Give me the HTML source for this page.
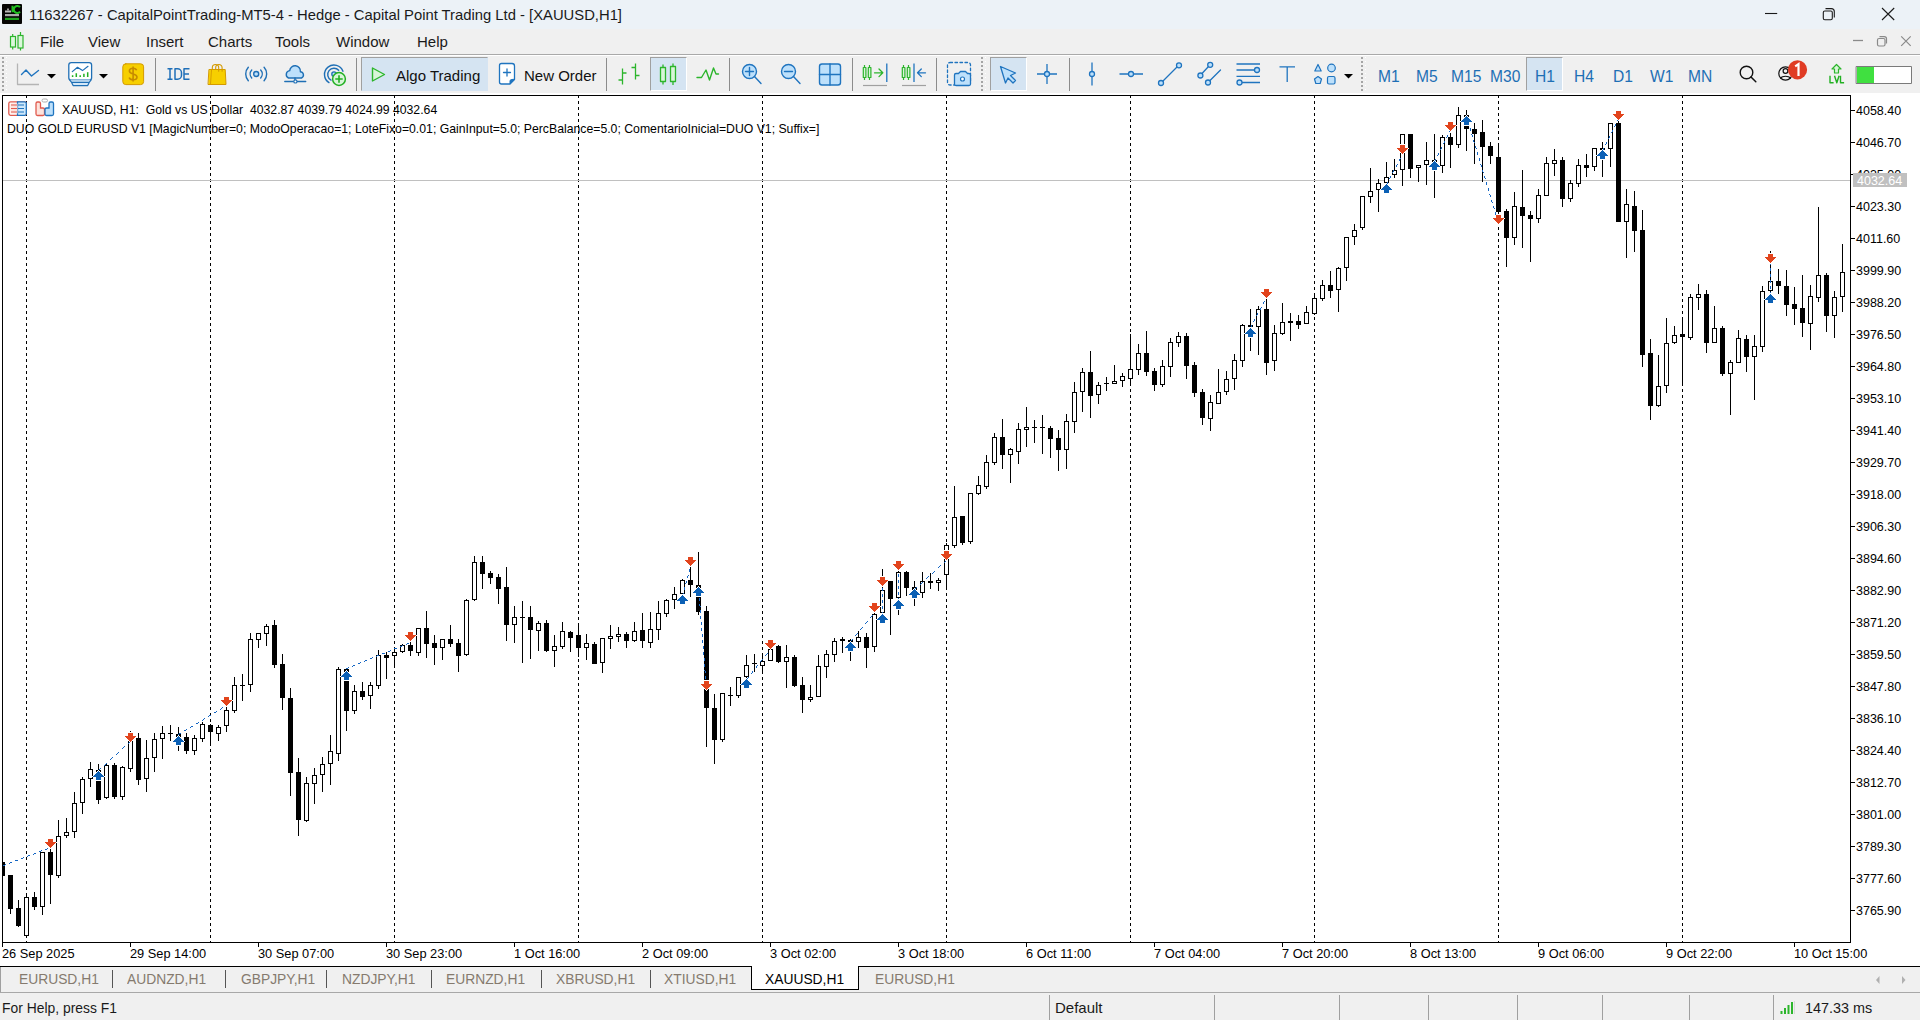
<!DOCTYPE html>
<html><head><meta charset="utf-8">
<style>
*{margin:0;padding:0;box-sizing:border-box}
html,body{width:1920px;height:1020px;overflow:hidden;background:#f0f0f0;font-family:"Liberation Sans",sans-serif;color:#000;position:relative}
.abs{position:absolute}
#title{position:absolute;left:0;top:0;width:1920px;height:29px;background:#ecf2f7}
#title .t{position:absolute;left:29px;top:7px;font-size:14.8px;color:#1a1a1a;white-space:nowrap}
#menu{position:absolute;left:0;top:29px;width:1920px;height:26px;background:#f0f0f0;border-bottom:1px solid #a9a9a9}
#menu .m{position:absolute;top:4px;font-size:15px;color:#1a1a1a}
#tb{position:absolute;left:0;top:55px;width:1920px;height:38px;background:#f0f0f0;box-shadow:inset 0 1px 0 #fff}
.sep{position:absolute;top:3px;width:1px;height:33px;background:#8c8c8c}
.grip{position:absolute;top:2px;width:8px;height:36px}
.tbt{position:absolute;font-size:15px;color:#111;top:11.5px;white-space:nowrap}
.tf{position:absolute;font-size:15.6px;color:#1e6fb5;top:12.5px}
.sel{position:absolute;background:#d5e4f2;border:1px solid #c4d6e8}
.pl{position:absolute;left:1856px;font-size:12.5px;line-height:14px;white-space:nowrap}
.dl{position:absolute;top:947px;font-size:12.8px;line-height:14px;white-space:nowrap}
.curp{position:absolute;left:1853px;top:173px;width:54px;height:14px;background:#c0c0c0;color:#fff;font-size:12.5px;line-height:16px;padding-left:4px;overflow:hidden}
.ct{position:absolute;font-size:12.25px;line-height:13px;white-space:nowrap}
#tabs{position:absolute;left:0;top:966px;width:1920px;height:27px;background:#f0f0f0;border-top:1px solid #000;border-bottom:1px solid #a8a8a8}
.tab{position:absolute;top:3.5px;font-size:14.4px;color:#857a6e;white-space:nowrap;transform:scaleX(0.96);transform-origin:0 0}
.tsep{position:absolute;top:2.5px;width:1px;height:18px;background:#555}
#status{position:absolute;left:0;top:993px;width:1920px;height:27px;background:#f0f0f0}
.st{position:absolute;top:6px;font-size:15px;transform-origin:0 0;color:#1a1a1a;white-space:nowrap}
.ssep{position:absolute;top:2px;width:1px;height:25px;background:#a0a0a0}
</style></head><body>
<div id="title">
  <svg class="abs" style="left:2px;top:4px" width="20" height="20"><rect width="20" height="20" rx="1" fill="#050505"/><path d="M10.5 1.8v6.5M18 3.2a3.5 3.5 0 1 0 0 4.5" stroke="#22c022" stroke-width="2" fill="none"/><rect x="3" y="6.5" width="6" height="2" fill="#bbb"/><rect x="5" y="4.5" width="2" height="2" fill="#999"/><rect x="3" y="10" width="14" height="2.2" fill="#aaa"/><rect x="3" y="13.8" width="14" height="2.2" fill="#1fa51f"/></svg>
  <div class="t">11632267 - CapitalPointTrading-MT5-4 - Hedge - Capital Point Trading Ltd - [XAUUSD,H1]</div>
  <svg class="abs" style="left:1740px;top:0" width="180" height="29" fill="none"><path d="M25 13.5h12.2" stroke="#1a1a1a" stroke-width="1.1"/><rect x="83.3" y="11" width="9" height="8.7" rx="1.5" stroke="#1a1a1a" stroke-width="1.1"/><path d="M85.5 8.6h5.8a3 3 0 0 1 3 3v5.8" stroke="#1a1a1a" stroke-width="1.1"/><path d="M142 8l12.2 12M154.2 8l-12.2 12" stroke="#1a1a1a" stroke-width="1.1"/></svg>
</div>
<div id="menu">
  <svg class="abs" style="left:0;top:-29px" width="30" height="60" fill="none"><path d="M12.7 34v15.5M20.5 32v18.5" stroke="#2db52d" stroke-width="1.2"/><rect x="10.5" y="36.5" width="5" height="10.5" fill="#dcf7dc" stroke="#2db52d" stroke-width="1.2"/><rect x="18" y="35.5" width="5" height="12.5" fill="#dcf7dc" stroke="#2db52d" stroke-width="1.2"/></svg>
  <div class="m" style="left:40px">File</div>
  <div class="m" style="left:88px">View</div>
  <div class="m" style="left:146px">Insert</div>
  <div class="m" style="left:208px">Charts</div>
  <div class="m" style="left:275px">Tools</div>
  <div class="m" style="left:336px">Window</div>
  <div class="m" style="left:417px">Help</div>
  <svg class="abs" style="left:1840px;top:-29px" width="80" height="60" fill="none"><path d="M13 40.5h10" stroke="#8a8a8a" stroke-width="1.3"/><rect x="37.5" y="38.5" width="7.5" height="7.5" rx="1.5" stroke="#8a8a8a" stroke-width="1.2"/><path d="M39.5 36.6h4.8a2.2 2.2 0 0 1 2.2 2.2v4.8" stroke="#8a8a8a" stroke-width="1.2"/><path d="M61.2 36.3l9.5 9.5M70.7 36.3l-9.5 9.5" stroke="#8a8a8a" stroke-width="1.2"/></svg>
</div>
<div id="tb">
  <svg class="grip" style="left:2px" width="8" height="36"><rect x="0" y="0" width="2" height="2" fill="#a4a4a4"/><rect x="4" y="0" width="1" height="1" fill="#fff"/><rect x="0" y="4" width="2" height="2" fill="#a4a4a4"/><rect x="4" y="4" width="1" height="1" fill="#fff"/><rect x="0" y="8" width="2" height="2" fill="#a4a4a4"/><rect x="4" y="8" width="1" height="1" fill="#fff"/><rect x="0" y="12" width="2" height="2" fill="#a4a4a4"/><rect x="4" y="12" width="1" height="1" fill="#fff"/><rect x="0" y="16" width="2" height="2" fill="#a4a4a4"/><rect x="4" y="16" width="1" height="1" fill="#fff"/><rect x="0" y="20" width="2" height="2" fill="#a4a4a4"/><rect x="4" y="20" width="1" height="1" fill="#fff"/><rect x="0" y="24" width="2" height="2" fill="#a4a4a4"/><rect x="4" y="24" width="1" height="1" fill="#fff"/><rect x="0" y="28" width="2" height="2" fill="#a4a4a4"/><rect x="4" y="28" width="1" height="1" fill="#fff"/><rect x="0" y="32" width="2" height="2" fill="#a4a4a4"/><rect x="4" y="32" width="1" height="1" fill="#fff"/></svg>
  <div class="sep" style="left:155px"></div>
  <div class="sep" style="left:356px"></div>
  <div class="sep" style="left:606px"></div>
  <div class="sep" style="left:729px"></div>
  <div class="sep" style="left:852px"></div>
  <div class="sep" style="left:936px"></div>
  <svg class="grip" style="left:981px" width="8" height="36"><rect x="0" y="0" width="2" height="2" fill="#a4a4a4"/><rect x="4" y="0" width="1" height="1" fill="#fff"/><rect x="0" y="4" width="2" height="2" fill="#a4a4a4"/><rect x="4" y="4" width="1" height="1" fill="#fff"/><rect x="0" y="8" width="2" height="2" fill="#a4a4a4"/><rect x="4" y="8" width="1" height="1" fill="#fff"/><rect x="0" y="12" width="2" height="2" fill="#a4a4a4"/><rect x="4" y="12" width="1" height="1" fill="#fff"/><rect x="0" y="16" width="2" height="2" fill="#a4a4a4"/><rect x="4" y="16" width="1" height="1" fill="#fff"/><rect x="0" y="20" width="2" height="2" fill="#a4a4a4"/><rect x="4" y="20" width="1" height="1" fill="#fff"/><rect x="0" y="24" width="2" height="2" fill="#a4a4a4"/><rect x="4" y="24" width="1" height="1" fill="#fff"/><rect x="0" y="28" width="2" height="2" fill="#a4a4a4"/><rect x="4" y="28" width="1" height="1" fill="#fff"/><rect x="0" y="32" width="2" height="2" fill="#a4a4a4"/><rect x="4" y="32" width="1" height="1" fill="#fff"/></svg>
  <div class="sep" style="left:1069px"></div>
  <svg class="grip" style="left:1361px" width="8" height="36"><rect x="0" y="0" width="2" height="2" fill="#a4a4a4"/><rect x="4" y="0" width="1" height="1" fill="#fff"/><rect x="0" y="4" width="2" height="2" fill="#a4a4a4"/><rect x="4" y="4" width="1" height="1" fill="#fff"/><rect x="0" y="8" width="2" height="2" fill="#a4a4a4"/><rect x="4" y="8" width="1" height="1" fill="#fff"/><rect x="0" y="12" width="2" height="2" fill="#a4a4a4"/><rect x="4" y="12" width="1" height="1" fill="#fff"/><rect x="0" y="16" width="2" height="2" fill="#a4a4a4"/><rect x="4" y="16" width="1" height="1" fill="#fff"/><rect x="0" y="20" width="2" height="2" fill="#a4a4a4"/><rect x="4" y="20" width="1" height="1" fill="#fff"/><rect x="0" y="24" width="2" height="2" fill="#a4a4a4"/><rect x="4" y="24" width="1" height="1" fill="#fff"/><rect x="0" y="28" width="2" height="2" fill="#a4a4a4"/><rect x="4" y="28" width="1" height="1" fill="#fff"/><rect x="0" y="32" width="2" height="2" fill="#a4a4a4"/><rect x="4" y="32" width="1" height="1" fill="#fff"/></svg>
  <div class="sel" style="left:361px;top:2px;width:127px;height:34px;border-color:#a0a0a0 #d6e4f2 #d6e4f2 #a0a0a0"></div>
  <div class="sel" style="left:650px;top:2px;width:37px;height:34px;border-color:#a0a0a0 #fff #fff #a0a0a0"></div>
  <div class="sel" style="left:990px;top:2px;width:37px;height:34px;border-color:#a0a0a0 #fff #fff #a0a0a0"></div>
  <div class="sel" style="left:1526px;top:2px;width:37px;height:34px;border-color:#a0a0a0 #fff #fff #a0a0a0"></div>
  <div class="tbt" style="left:396px">Algo Trading</div>
  <div class="tbt" style="left:524px">New Order</div>
  <div class="tf" style="left:1378px">M1</div>
  <div class="tf" style="left:1416px">M5</div>
  <div class="tf" style="left:1451px">M15</div>
  <div class="tf" style="left:1490px">M30</div>
  <div class="tf" style="left:1535px">H1</div>
  <div class="tf" style="left:1574px">H4</div>
  <div class="tf" style="left:1613px">D1</div>
  <div class="tf" style="left:1650px">W1</div>
  <div class="tf" style="left:1688px">MN</div>
</div>
<svg class="abs" style="left:0;top:0" width="1920" height="93" fill="none" stroke-linecap="round" stroke-linejoin="round">
  <!-- line chart -->
  <path d="M17.5 63.5V84.5H39" stroke="#b4b4b4" stroke-width="1.3" stroke-linecap="butt"/>
  <path d="M21.5 74.5L26 70L31.5 76L38.5 70.5" stroke="#1f74bf" stroke-width="1.4"/>
  <path d="M47 74h9l-4.5 4.5z" fill="#000" stroke="none"/>
  <!-- monitor -->
  <rect x="68.8" y="62.6" width="22.8" height="17.6" rx="2.5" fill="#fff" stroke="#1f6fb5" stroke-width="1.3"/>
  <path d="M69.8 80.2l1.8 2.2h17.6l1.8-2.2M71.6 82.4l1.5 3.2h14.6l1.5-3.2" fill="#d4e8f8" stroke="#1f6fb5" stroke-width="1.2"/>
  <path d="M72.3 71.6L77.5 67.3L82.5 70.6L88 66.3" stroke="#1f6fb5" stroke-width="1.2"/>
  <path d="M72.6 75.3v1.6M76.3 73.3v3.6M80.2 75.3v1.6M83.9 73.7v3.2M87.7 72.3v4.6" stroke="#22b022" stroke-width="1.5" stroke-linecap="butt"/>
  <path d="M99 74h9l-4.5 4.5z" fill="#000" stroke="none"/>
  <!-- dollar -->
  <rect x="122.8" y="63.8" width="20.8" height="20.8" rx="3" fill="#f7cf00" stroke="#d49a00" stroke-width="1"/>
  <path d="M136.6 70.3a3.6 2.8 0 0 0-3.5-2.1c-2.2 0-3.7 1.1-3.7 2.8c0 3.8 7.6 2 7.6 6c0 1.8-1.7 2.8-3.9 2.8a4 3 0 0 1-3.9-2.3M133.1 66.4v15" stroke="#c68a00" stroke-width="1.6" stroke-linecap="butt"/>
  <!-- IDE -->
  <path d="M167.5 68.8h5M167.5 79.2h5M170 68.8v10.4" stroke="#1f6fb8" stroke-width="1.5" stroke-linecap="butt"/>
  <path d="M175 68.8h2.5a4 4 0 0 1 4 4v2.4a4 4 0 0 1-4 4h-2.5z" stroke="#1f6fb8" stroke-width="1.5" stroke-linecap="butt"/>
  <path d="M189.5 68.8h-5.5v10.4h5.5M184 74h5" stroke="#1f6fb8" stroke-width="1.5" stroke-linecap="butt"/>
  <!-- bag -->
  <path d="M209.3 69.5h15.9l0.8 15h-17.6z" fill="#f7cf00" stroke="#d49a00" stroke-width="1"/>
  <path d="M211.5 69.8l-1 14.5" stroke="#d49a00" stroke-width="0.9"/>
  <path d="M212.3 69.5v-1.8a3.2 3.2 0 0 1 6.4 0v3.5M215.7 69.5v-1.8a3.2 3.2 0 0 1 6.4 0v3.5" stroke="#d49a00" stroke-width="1.1"/>
  <!-- signal -->
  <circle cx="256.2" cy="74" r="2.5" fill="#bde0fb" stroke="#1f6fb5" stroke-width="1.4"/>
  <path d="M251.7 70a6 6 0 0 0 0 8M260.7 70a6 6 0 0 1 0 8M248.3 67.3a10 10 0 0 0 0 13.4M264.1 67.3a10 10 0 0 1 0 13.4" stroke="#1f6fb5" stroke-width="1.4"/>
  <!-- cloud -->
  <path d="M288.5 78a3.9 3.9 0 0 1 1.2-7.4a5.3 5.3 0 0 1 10.7 1.1a3.3 3.3 0 0 1 1.1 6.3z" fill="#bde0fb" stroke="#1f6fb5" stroke-width="1.4"/>
  <path d="M295 78v2.3M284.8 81.5h8.6M297.4 81.5h8.3" stroke="#1f6fb5" stroke-width="1.4" stroke-linecap="round"/>
  <circle cx="295.4" cy="81.4" r="1.6" fill="#fff" stroke="#1f6fb5" stroke-width="1.2"/>
  <!-- radar plus -->
  <path d="M328.97 82.56A9.5 9.5 0 1 1 342.93 71.25M331.04 80.06A6.3 6.3 0 1 1 338.68 70.28" stroke="#1f6fb5" stroke-width="1.4" stroke-linecap="round"/>
  <circle cx="334" cy="74" r="2.2" fill="#bde0fb" stroke="#1f6fb5" stroke-width="1.3"/>
  <circle cx="339" cy="79" r="6.4" fill="#d8f5d8" stroke="#22b022" stroke-width="1.5"/>
  <path d="M339 75.3v7.4M335.3 79h7.4" stroke="#22b022" stroke-width="1.6" stroke-linecap="butt"/>
  <!-- algo play -->
  <path d="M372.5 68l12 6.5l-12 6.5z" fill="#d8f5d8" stroke="#2cb52c" stroke-width="1.4"/>
  <!-- new order -->
  <path d="M501.5 63.5h10.5a2.5 2.5 0 0 1 2.5 2.5v13.5l-4.5 4.5h-8.5a2 2 0 0 1-2-2v-16.5a2 2 0 0 1 2-2z" fill="#fff" stroke="#1f74bf" stroke-width="1.3"/>
  <path d="M514.5 79.5l-4.5 4.5v-3a1.5 1.5 0 0 1 1.5-1.5z" fill="#1f74bf" stroke="#1f74bf" stroke-width="1"/>
  <path d="M507 69v7M503.5 72.5h7" stroke="#1f74bf" stroke-width="1.3"/>
  <!-- bar chart -->
  <path d="M622.5 68.5v16M618.5 80h4M622.5 73h4M635.5 63.5v16M631.5 67.5h4M635.5 75.5h4" stroke="#2cb52c" stroke-width="1.3" stroke-linecap="butt"/>
  <!-- candles -->
  <path d="M663 64.5v20M673 63.5v21.5" stroke="#2cb52c" stroke-width="1.3" stroke-linecap="butt"/>
  <rect x="660.5" y="67.5" width="5" height="14" fill="#d8f5d8" stroke="#2cb52c" stroke-width="1.3"/>
  <rect x="670.5" y="66.5" width="5" height="15" fill="#d8f5d8" stroke="#2cb52c" stroke-width="1.3"/>
  <!-- line -->
  <path d="M697 77.5h4.5l4.5-7.5l3.5 10l4-12l2.5 6h2.5" stroke="#2cb52c" stroke-width="1.4"/>
  <!-- zoom in/out -->
  <circle cx="749.5" cy="71.5" r="7" fill="#bde0fb" stroke="#1f74bf" stroke-width="1.4"/>
  <path d="M754.5 76.5l6.5 7M749.5 67.5v8M745.5 71.5h8" stroke="#1f74bf" stroke-width="1.4"/>
  <circle cx="788.5" cy="71.5" r="7" fill="#bde0fb" stroke="#1f74bf" stroke-width="1.4"/>
  <path d="M793.5 76.5l6.5 7M784.5 71.5h8" stroke="#1f74bf" stroke-width="1.4"/>
  <!-- grid -->
  <rect x="819.5" y="64" width="21" height="21" rx="2.5" fill="#bde0fb" stroke="#1f74bf" stroke-width="1.4"/>
  <path d="M830 64v21M819.5 74.5h21" stroke="#1f74bf" stroke-width="1.4"/>
  <!-- autoscroll -->
  <path d="M864.5 65v15M869.5 65v15" stroke="#2cb52c" stroke-width="1.2" stroke-linecap="butt"/>
  <rect x="863.3" y="67.5" width="2.6" height="10" fill="#d8f5d8" stroke="#2cb52c" stroke-width="1.2"/>
  <rect x="868.3" y="67.5" width="2.6" height="10" fill="#d8f5d8" stroke="#2cb52c" stroke-width="1.2"/>
  <path d="M874.5 72.8h8M879 69l3.8 3.8l-3.8 3.8" stroke="#2cb52c" stroke-width="1.3"/>
  <path d="M886.8 63.5v18.5" stroke="#1f74bf" stroke-width="1.3" stroke-linecap="butt"/>
  <path d="M863 85.5h24" stroke="#a0a0a0" stroke-width="1.2" stroke-linecap="butt"/>
  <path d="M903.5 65v15M908.5 65v15" stroke="#2cb52c" stroke-width="1.2" stroke-linecap="butt"/>
  <rect x="902.3" y="67.5" width="2.6" height="10" fill="#d8f5d8" stroke="#2cb52c" stroke-width="1.2"/>
  <rect x="907.3" y="67.5" width="2.6" height="10" fill="#d8f5d8" stroke="#2cb52c" stroke-width="1.2"/>
  <path d="M914 63.5v18.5" stroke="#1f74bf" stroke-width="1.3" stroke-linecap="butt"/>
  <path d="M925.5 72.8h-8M921.3 69l-3.8 3.8l3.8 3.8" stroke="#1f74bf" stroke-width="1.3"/>
  <path d="M902 85.5h24" stroke="#a0a0a0" stroke-width="1.2" stroke-linecap="butt"/>
  <!-- screenshot -->
  <rect x="947.5" y="62.5" width="23" height="22.5" rx="2.5" stroke="#1f74bf" stroke-width="1.3" stroke-dasharray="2.5,2.5"/>
  <path d="M954.5 75a1.5 1.5 0 0 1 1.5-1.5h2.5l2-2h5l2 2h1.5a1.5 1.5 0 0 1 1.5 1.5v9a1.5 1.5 0 0 1-1.5 1.5h-13a1.5 1.5 0 0 1-1.5-1.5z" fill="#bde0fb" stroke="#1f74bf" stroke-width="1.3"/>
  <circle cx="962.5" cy="79" r="2" fill="#fff" stroke="#1f74bf" stroke-width="1.2"/>
  <!-- cursor -->
  <path d="M1000.5 66.5l15 6.5l-5 2.5l5 5l-2.5 2.5l-5-5l-2.5 5z" fill="#bde0fb" stroke="#1f74bf" stroke-width="1.3"/>
  <!-- crosshair -->
  <path d="M1037 74h7.5M1049.5 74h7.5M1047 64v7.5M1047 76.5v7.5" stroke="#1f74bf" stroke-width="1.3" stroke-linecap="butt"/>
  <circle cx="1047" cy="74" r="2.5" fill="#bde0fb" stroke="#1f74bf" stroke-width="1.3"/>
  <!-- vline -->
  <path d="M1092 62.5v9M1092 76.5v9" stroke="#1f74bf" stroke-width="1.3" stroke-linecap="butt"/>
  <circle cx="1092" cy="74" r="2.5" fill="#bde0fb" stroke="#1f74bf" stroke-width="1.3"/>
  <!-- hline -->
  <path d="M1119.5 74h9M1133.5 74h9.5" stroke="#1f74bf" stroke-width="1.3" stroke-linecap="butt"/>
  <circle cx="1131" cy="74" r="2.5" fill="#bde0fb" stroke="#1f74bf" stroke-width="1.3"/>
  <!-- trendline -->
  <path d="M1163 81l14-14" stroke="#1f74bf" stroke-width="1.3"/>
  <circle cx="1161" cy="83" r="2.5" fill="#bde0fb" stroke="#1f74bf" stroke-width="1.3"/>
  <circle cx="1179" cy="65.3" r="2.5" fill="#bde0fb" stroke="#1f74bf" stroke-width="1.3"/>
  <!-- channel -->
  <path d="M1202 73.5l6.5-7M1210 80.5l10.5-10.5" stroke="#1f74bf" stroke-width="1.3"/>
  <circle cx="1200.4" cy="75.5" r="2.5" fill="#bde0fb" stroke="#1f74bf" stroke-width="1.3"/>
  <circle cx="1210.2" cy="64.8" r="2.5" fill="#bde0fb" stroke="#1f74bf" stroke-width="1.3"/>
  <circle cx="1208" cy="82.5" r="2.5" fill="#bde0fb" stroke="#1f74bf" stroke-width="1.3"/>
  <!-- fibo -->
  <path d="M1236.5 64h23.5M1236.5 70h18M1236.5 76.3h23.5M1242 82.5h18" stroke="#1f74bf" stroke-width="1.3" stroke-linecap="butt"/>
  <circle cx="1257" cy="70" r="2.5" fill="#bde0fb" stroke="#1f74bf" stroke-width="1.3"/>
  <circle cx="1239.5" cy="82.5" r="2.5" fill="#bde0fb" stroke="#1f74bf" stroke-width="1.3"/>
  <!-- text T -->
  <path d="M1279.5 66.8h15.5M1287.2 66.8v15.2" stroke="#1f74bf" stroke-width="1.3" stroke-linecap="butt"/>
  <!-- shapes -->
  <path d="M1318 64.5l3.2 6.5h-6.4z" fill="#bde0fb" stroke="#1f74bf" stroke-width="1.2"/>
  <circle cx="1331.5" cy="68" r="3.8" fill="#bde0fb" stroke="#1f74bf" stroke-width="1.2"/>
  <path d="M1318 76.5l3.5 2.5l-1.3 4.5h-4.4l-1.3-4.5z" fill="#bde0fb" stroke="#1f74bf" stroke-width="1.2"/>
  <rect x="1327.5" y="76.5" width="7.5" height="7.5" rx="1.5" fill="#bde0fb" stroke="#1f74bf" stroke-width="1.2"/>
  <path d="M1344 74h9l-4.5 4.5z" fill="#000" stroke="none"/>
  <!-- search -->
  <circle cx="1746.5" cy="72.5" r="6.3" stroke="#111" stroke-width="1.4"/>
  <path d="M1751 77l4.8 4.8" stroke="#111" stroke-width="1.5"/>
  <!-- account -->
  <circle cx="1785.5" cy="73.5" r="6.7" stroke="#111" stroke-width="1.2"/>
  <circle cx="1785.5" cy="71" r="2.4" stroke="#111" stroke-width="1.2"/>
  <path d="M1780.5 78a5.5 3 0 0 1 10 0" stroke="#111" stroke-width="1.2"/>
  <circle cx="1797.5" cy="69.8" r="9.6" fill="#e03c24" stroke="none"/>
  <path d="M1795.2 66.3l3.3-2.3v12" stroke="#fff" stroke-width="2.2" stroke-linecap="butt" stroke-linejoin="miter"/>
  <!-- LVL -->
  <path d="M1836.5 64.5l-4.5 4.5h2.5v4h4v-4h2.5z" fill="#d8f5d8" stroke="#2cb52c" stroke-width="1.2"/>
  <path d="M1830 75.8v7h3.6M1834.5 75.8l2.3 7l2.3-7M1840.5 75.8v7h3.6" stroke="#22b022" stroke-width="1.4" stroke-linecap="butt" stroke-linejoin="round"/>
  <!-- progress -->
  <rect x="1856.5" y="66.5" width="55" height="17" fill="#fff" stroke="#7a7a7a" stroke-width="1"/>
  <rect x="1857" y="67" width="17" height="16" fill="#40e040" stroke="none"/>
</svg>
<svg width="1920" height="1020" style="position:absolute;left:0;top:0" shape-rendering="crispEdges">
<defs><clipPath id="pc"><rect x="3" y="96" width="1847" height="846"/></clipPath></defs>
<rect x="0" y="93" width="1920" height="873" fill="#fff"/>
<g clip-path="url(#pc)">
<line x1="26.5" y1="95" x2="26.5" y2="942" stroke="#000" stroke-width="1" stroke-dasharray="3,3"/>
<line x1="210.5" y1="95" x2="210.5" y2="942" stroke="#000" stroke-width="1" stroke-dasharray="3,3"/>
<line x1="394.5" y1="95" x2="394.5" y2="942" stroke="#000" stroke-width="1" stroke-dasharray="3,3"/>
<line x1="578.5" y1="95" x2="578.5" y2="942" stroke="#000" stroke-width="1" stroke-dasharray="3,3"/>
<line x1="762.5" y1="95" x2="762.5" y2="942" stroke="#000" stroke-width="1" stroke-dasharray="3,3"/>
<line x1="946.5" y1="95" x2="946.5" y2="942" stroke="#000" stroke-width="1" stroke-dasharray="3,3"/>
<line x1="1130.5" y1="95" x2="1130.5" y2="942" stroke="#000" stroke-width="1" stroke-dasharray="3,3"/>
<line x1="1314.5" y1="95" x2="1314.5" y2="942" stroke="#000" stroke-width="1" stroke-dasharray="3,3"/>
<line x1="1498.5" y1="95" x2="1498.5" y2="942" stroke="#000" stroke-width="1" stroke-dasharray="3,3"/>
<line x1="1682.5" y1="95" x2="1682.5" y2="942" stroke="#000" stroke-width="1" stroke-dasharray="3,3"/>
<rect x="3" y="180" width="1847" height="1" fill="#c0c0c0"/>
<rect x="2" y="862" width="1" height="16" fill="#000"/>
<rect x="0" y="862" width="5" height="14" fill="#000"/>
<rect x="10" y="875" width="1" height="39" fill="#000"/>
<rect x="8" y="875" width="5" height="34" fill="#000"/>
<rect x="18" y="900" width="1" height="27" fill="#000"/>
<rect x="16" y="908" width="5" height="18" fill="#000"/>
<rect x="26" y="893" width="1" height="45" fill="#000"/>
<rect x="24" y="897" width="5" height="39" fill="#000"/>
<rect x="25" y="898" width="3" height="37" fill="#fff"/>
<rect x="34" y="892" width="1" height="18" fill="#000"/>
<rect x="32" y="897" width="5" height="10" fill="#000"/>
<rect x="42" y="852" width="1" height="63" fill="#000"/>
<rect x="40" y="852" width="5" height="55" fill="#000"/>
<rect x="41" y="853" width="3" height="53" fill="#fff"/>
<rect x="50" y="847" width="1" height="57" fill="#000"/>
<rect x="48" y="852" width="5" height="23" fill="#000"/>
<rect x="58" y="820" width="1" height="58" fill="#000"/>
<rect x="56" y="836" width="5" height="40" fill="#000"/>
<rect x="57" y="837" width="3" height="38" fill="#fff"/>
<rect x="66" y="818" width="1" height="20" fill="#000"/>
<rect x="64" y="832" width="5" height="4" fill="#000"/>
<rect x="65" y="833" width="3" height="2" fill="#fff"/>
<rect x="74" y="792" width="1" height="46" fill="#000"/>
<rect x="72" y="803" width="5" height="29" fill="#000"/>
<rect x="73" y="804" width="3" height="27" fill="#fff"/>
<rect x="82" y="777" width="1" height="37" fill="#000"/>
<rect x="80" y="779" width="5" height="24" fill="#000"/>
<rect x="81" y="780" width="3" height="22" fill="#fff"/>
<rect x="90" y="762" width="1" height="25" fill="#000"/>
<rect x="88" y="769" width="5" height="10" fill="#000"/>
<rect x="89" y="770" width="3" height="8" fill="#fff"/>
<rect x="98" y="764" width="1" height="40" fill="#000"/>
<rect x="96" y="770" width="5" height="30" fill="#000"/>
<rect x="106" y="764" width="1" height="35" fill="#000"/>
<rect x="104" y="765" width="5" height="33" fill="#000"/>
<rect x="105" y="766" width="3" height="31" fill="#fff"/>
<rect x="114" y="763" width="1" height="36" fill="#000"/>
<rect x="112" y="765" width="5" height="32" fill="#000"/>
<rect x="122" y="766" width="1" height="34" fill="#000"/>
<rect x="120" y="767" width="5" height="30" fill="#000"/>
<rect x="121" y="768" width="3" height="28" fill="#fff"/>
<rect x="130" y="731" width="1" height="41" fill="#000"/>
<rect x="128" y="740" width="5" height="29" fill="#000"/>
<rect x="129" y="741" width="3" height="27" fill="#fff"/>
<rect x="138" y="733" width="1" height="52" fill="#000"/>
<rect x="136" y="738" width="5" height="42" fill="#000"/>
<rect x="146" y="740" width="1" height="52" fill="#000"/>
<rect x="144" y="758" width="5" height="21" fill="#000"/>
<rect x="145" y="759" width="3" height="19" fill="#fff"/>
<rect x="154" y="733" width="1" height="39" fill="#000"/>
<rect x="152" y="739" width="5" height="19" fill="#000"/>
<rect x="153" y="740" width="3" height="17" fill="#fff"/>
<rect x="162" y="726" width="1" height="33" fill="#000"/>
<rect x="160" y="733" width="5" height="6" fill="#000"/>
<rect x="161" y="734" width="3" height="4" fill="#fff"/>
<rect x="170" y="725" width="1" height="16" fill="#000"/>
<rect x="168" y="733" width="5" height="1" fill="#000"/>
<rect x="178" y="727" width="1" height="24" fill="#000"/>
<rect x="176" y="734" width="5" height="3" fill="#000"/>
<rect x="186" y="733" width="1" height="21" fill="#000"/>
<rect x="184" y="737" width="5" height="14" fill="#000"/>
<rect x="194" y="735" width="1" height="20" fill="#000"/>
<rect x="192" y="738" width="5" height="13" fill="#000"/>
<rect x="193" y="739" width="3" height="11" fill="#fff"/>
<rect x="202" y="722" width="1" height="20" fill="#000"/>
<rect x="200" y="724" width="5" height="15" fill="#000"/>
<rect x="201" y="725" width="3" height="13" fill="#fff"/>
<rect x="210" y="724" width="1" height="22" fill="#000"/>
<rect x="208" y="725" width="5" height="7" fill="#000"/>
<rect x="218" y="725" width="1" height="16" fill="#000"/>
<rect x="216" y="727" width="5" height="7" fill="#000"/>
<rect x="217" y="728" width="3" height="5" fill="#fff"/>
<rect x="226" y="707" width="1" height="25" fill="#000"/>
<rect x="224" y="710" width="5" height="16" fill="#000"/>
<rect x="225" y="711" width="3" height="14" fill="#fff"/>
<rect x="234" y="677" width="1" height="36" fill="#000"/>
<rect x="232" y="685" width="5" height="26" fill="#000"/>
<rect x="233" y="686" width="3" height="24" fill="#fff"/>
<rect x="242" y="674" width="1" height="27" fill="#000"/>
<rect x="240" y="685" width="5" height="1" fill="#000"/>
<rect x="250" y="633" width="1" height="59" fill="#000"/>
<rect x="248" y="639" width="5" height="46" fill="#000"/>
<rect x="249" y="640" width="3" height="44" fill="#fff"/>
<rect x="258" y="633" width="1" height="15" fill="#000"/>
<rect x="256" y="633" width="5" height="7" fill="#000"/>
<rect x="257" y="634" width="3" height="5" fill="#fff"/>
<rect x="266" y="624" width="1" height="22" fill="#000"/>
<rect x="264" y="626" width="5" height="8" fill="#000"/>
<rect x="265" y="627" width="3" height="6" fill="#fff"/>
<rect x="274" y="620" width="1" height="48" fill="#000"/>
<rect x="272" y="625" width="5" height="40" fill="#000"/>
<rect x="282" y="654" width="1" height="56" fill="#000"/>
<rect x="280" y="664" width="5" height="34" fill="#000"/>
<rect x="290" y="688" width="1" height="108" fill="#000"/>
<rect x="288" y="698" width="5" height="75" fill="#000"/>
<rect x="298" y="758" width="1" height="78" fill="#000"/>
<rect x="296" y="772" width="5" height="48" fill="#000"/>
<rect x="306" y="777" width="1" height="45" fill="#000"/>
<rect x="304" y="783" width="5" height="38" fill="#000"/>
<rect x="305" y="784" width="3" height="36" fill="#fff"/>
<rect x="314" y="768" width="1" height="36" fill="#000"/>
<rect x="312" y="775" width="5" height="9" fill="#000"/>
<rect x="313" y="776" width="3" height="7" fill="#fff"/>
<rect x="322" y="757" width="1" height="35" fill="#000"/>
<rect x="320" y="764" width="5" height="11" fill="#000"/>
<rect x="321" y="765" width="3" height="9" fill="#fff"/>
<rect x="330" y="735" width="1" height="50" fill="#000"/>
<rect x="328" y="751" width="5" height="13" fill="#000"/>
<rect x="329" y="752" width="3" height="11" fill="#fff"/>
<rect x="338" y="667" width="1" height="94" fill="#000"/>
<rect x="336" y="669" width="5" height="85" fill="#000"/>
<rect x="337" y="670" width="3" height="83" fill="#fff"/>
<rect x="346" y="668" width="1" height="63" fill="#000"/>
<rect x="344" y="669" width="5" height="42" fill="#000"/>
<rect x="354" y="685" width="1" height="29" fill="#000"/>
<rect x="352" y="691" width="5" height="20" fill="#000"/>
<rect x="353" y="692" width="3" height="18" fill="#fff"/>
<rect x="362" y="682" width="1" height="18" fill="#000"/>
<rect x="360" y="691" width="5" height="6" fill="#000"/>
<rect x="370" y="682" width="1" height="27" fill="#000"/>
<rect x="368" y="685" width="5" height="11" fill="#000"/>
<rect x="369" y="686" width="3" height="9" fill="#fff"/>
<rect x="378" y="650" width="1" height="39" fill="#000"/>
<rect x="376" y="655" width="5" height="31" fill="#000"/>
<rect x="377" y="656" width="3" height="29" fill="#fff"/>
<rect x="386" y="652" width="1" height="27" fill="#000"/>
<rect x="384" y="655" width="5" height="3" fill="#000"/>
<rect x="394" y="649" width="1" height="18" fill="#000"/>
<rect x="392" y="652" width="5" height="4" fill="#000"/>
<rect x="393" y="653" width="3" height="2" fill="#fff"/>
<rect x="402" y="644" width="1" height="9" fill="#000"/>
<rect x="400" y="645" width="5" height="7" fill="#000"/>
<rect x="401" y="646" width="3" height="5" fill="#fff"/>
<rect x="410" y="642" width="1" height="14" fill="#000"/>
<rect x="408" y="645" width="5" height="6" fill="#000"/>
<rect x="418" y="628" width="1" height="28" fill="#000"/>
<rect x="416" y="628" width="5" height="25" fill="#000"/>
<rect x="417" y="629" width="3" height="23" fill="#fff"/>
<rect x="426" y="611" width="1" height="47" fill="#000"/>
<rect x="424" y="628" width="5" height="16" fill="#000"/>
<rect x="434" y="635" width="1" height="30" fill="#000"/>
<rect x="432" y="643" width="5" height="5" fill="#000"/>
<rect x="442" y="639" width="1" height="21" fill="#000"/>
<rect x="440" y="639" width="5" height="9" fill="#000"/>
<rect x="441" y="640" width="3" height="7" fill="#fff"/>
<rect x="450" y="625" width="1" height="22" fill="#000"/>
<rect x="448" y="639" width="5" height="5" fill="#000"/>
<rect x="458" y="639" width="1" height="33" fill="#000"/>
<rect x="456" y="643" width="5" height="13" fill="#000"/>
<rect x="466" y="599" width="1" height="57" fill="#000"/>
<rect x="464" y="600" width="5" height="55" fill="#000"/>
<rect x="465" y="601" width="3" height="53" fill="#fff"/>
<rect x="474" y="556" width="1" height="45" fill="#000"/>
<rect x="472" y="562" width="5" height="38" fill="#000"/>
<rect x="473" y="563" width="3" height="36" fill="#fff"/>
<rect x="482" y="556" width="1" height="33" fill="#000"/>
<rect x="480" y="562" width="5" height="12" fill="#000"/>
<rect x="490" y="571" width="1" height="13" fill="#000"/>
<rect x="488" y="573" width="5" height="5" fill="#000"/>
<rect x="498" y="574" width="1" height="30" fill="#000"/>
<rect x="496" y="577" width="5" height="12" fill="#000"/>
<rect x="506" y="567" width="1" height="74" fill="#000"/>
<rect x="504" y="587" width="5" height="38" fill="#000"/>
<rect x="514" y="606" width="1" height="37" fill="#000"/>
<rect x="512" y="617" width="5" height="8" fill="#000"/>
<rect x="513" y="618" width="3" height="6" fill="#fff"/>
<rect x="522" y="601" width="1" height="62" fill="#000"/>
<rect x="520" y="617" width="5" height="1" fill="#000"/>
<rect x="530" y="606" width="1" height="53" fill="#000"/>
<rect x="528" y="617" width="5" height="13" fill="#000"/>
<rect x="538" y="621" width="1" height="30" fill="#000"/>
<rect x="536" y="623" width="5" height="8" fill="#000"/>
<rect x="537" y="624" width="3" height="6" fill="#fff"/>
<rect x="546" y="620" width="1" height="32" fill="#000"/>
<rect x="544" y="623" width="5" height="28" fill="#000"/>
<rect x="554" y="635" width="1" height="32" fill="#000"/>
<rect x="552" y="646" width="5" height="5" fill="#000"/>
<rect x="553" y="647" width="3" height="3" fill="#fff"/>
<rect x="562" y="622" width="1" height="27" fill="#000"/>
<rect x="560" y="631" width="5" height="16" fill="#000"/>
<rect x="561" y="632" width="3" height="14" fill="#fff"/>
<rect x="570" y="631" width="1" height="21" fill="#000"/>
<rect x="568" y="632" width="5" height="6" fill="#000"/>
<rect x="578" y="623" width="1" height="34" fill="#000"/>
<rect x="576" y="635" width="5" height="13" fill="#000"/>
<rect x="586" y="634" width="1" height="26" fill="#000"/>
<rect x="584" y="643" width="5" height="5" fill="#000"/>
<rect x="585" y="644" width="3" height="3" fill="#fff"/>
<rect x="594" y="642" width="1" height="22" fill="#000"/>
<rect x="592" y="644" width="5" height="20" fill="#000"/>
<rect x="602" y="638" width="1" height="35" fill="#000"/>
<rect x="600" y="638" width="5" height="25" fill="#000"/>
<rect x="601" y="639" width="3" height="23" fill="#fff"/>
<rect x="610" y="625" width="1" height="24" fill="#000"/>
<rect x="608" y="636" width="5" height="3" fill="#000"/>
<rect x="609" y="637" width="3" height="1" fill="#fff"/>
<rect x="618" y="627" width="1" height="15" fill="#000"/>
<rect x="616" y="634" width="5" height="3" fill="#000"/>
<rect x="617" y="635" width="3" height="1" fill="#fff"/>
<rect x="626" y="632" width="1" height="16" fill="#000"/>
<rect x="624" y="634" width="5" height="7" fill="#000"/>
<rect x="634" y="622" width="1" height="20" fill="#000"/>
<rect x="632" y="631" width="5" height="10" fill="#000"/>
<rect x="633" y="632" width="3" height="8" fill="#fff"/>
<rect x="642" y="613" width="1" height="35" fill="#000"/>
<rect x="640" y="630" width="5" height="11" fill="#000"/>
<rect x="650" y="612" width="1" height="36" fill="#000"/>
<rect x="648" y="629" width="5" height="14" fill="#000"/>
<rect x="649" y="630" width="3" height="12" fill="#fff"/>
<rect x="658" y="601" width="1" height="39" fill="#000"/>
<rect x="656" y="613" width="5" height="17" fill="#000"/>
<rect x="657" y="614" width="3" height="15" fill="#fff"/>
<rect x="666" y="599" width="1" height="18" fill="#000"/>
<rect x="664" y="600" width="5" height="14" fill="#000"/>
<rect x="665" y="601" width="3" height="12" fill="#fff"/>
<rect x="674" y="587" width="1" height="22" fill="#000"/>
<rect x="672" y="594" width="5" height="6" fill="#000"/>
<rect x="673" y="595" width="3" height="4" fill="#fff"/>
<rect x="682" y="579" width="1" height="15" fill="#000"/>
<rect x="680" y="580" width="5" height="14" fill="#000"/>
<rect x="681" y="581" width="3" height="12" fill="#fff"/>
<rect x="690" y="567" width="1" height="30" fill="#000"/>
<rect x="688" y="580" width="5" height="5" fill="#000"/>
<rect x="698" y="552" width="1" height="63" fill="#000"/>
<rect x="696" y="585" width="5" height="27" fill="#000"/>
<rect x="706" y="606" width="1" height="141" fill="#000"/>
<rect x="704" y="611" width="5" height="97" fill="#000"/>
<rect x="714" y="694" width="1" height="70" fill="#000"/>
<rect x="712" y="708" width="5" height="32" fill="#000"/>
<rect x="722" y="693" width="1" height="49" fill="#000"/>
<rect x="720" y="693" width="5" height="47" fill="#000"/>
<rect x="721" y="694" width="3" height="45" fill="#fff"/>
<rect x="730" y="687" width="1" height="19" fill="#000"/>
<rect x="728" y="695" width="5" height="1" fill="#000"/>
<rect x="738" y="677" width="1" height="21" fill="#000"/>
<rect x="736" y="677" width="5" height="19" fill="#000"/>
<rect x="737" y="678" width="3" height="17" fill="#fff"/>
<rect x="746" y="655" width="1" height="23" fill="#000"/>
<rect x="744" y="665" width="5" height="12" fill="#000"/>
<rect x="745" y="666" width="3" height="10" fill="#fff"/>
<rect x="754" y="654" width="1" height="18" fill="#000"/>
<rect x="752" y="663" width="5" height="1" fill="#000"/>
<rect x="762" y="654" width="1" height="20" fill="#000"/>
<rect x="760" y="661" width="5" height="5" fill="#000"/>
<rect x="761" y="662" width="3" height="3" fill="#fff"/>
<rect x="770" y="648" width="1" height="13" fill="#000"/>
<rect x="768" y="649" width="5" height="12" fill="#000"/>
<rect x="769" y="650" width="3" height="10" fill="#fff"/>
<rect x="778" y="645" width="1" height="18" fill="#000"/>
<rect x="776" y="646" width="5" height="16" fill="#000"/>
<rect x="786" y="645" width="1" height="43" fill="#000"/>
<rect x="784" y="657" width="5" height="5" fill="#000"/>
<rect x="785" y="658" width="3" height="3" fill="#fff"/>
<rect x="794" y="655" width="1" height="32" fill="#000"/>
<rect x="792" y="657" width="5" height="29" fill="#000"/>
<rect x="802" y="677" width="1" height="36" fill="#000"/>
<rect x="800" y="685" width="5" height="15" fill="#000"/>
<rect x="810" y="685" width="1" height="17" fill="#000"/>
<rect x="808" y="697" width="5" height="3" fill="#000"/>
<rect x="809" y="698" width="3" height="1" fill="#fff"/>
<rect x="818" y="655" width="1" height="42" fill="#000"/>
<rect x="816" y="666" width="5" height="31" fill="#000"/>
<rect x="817" y="667" width="3" height="29" fill="#fff"/>
<rect x="826" y="650" width="1" height="28" fill="#000"/>
<rect x="824" y="654" width="5" height="13" fill="#000"/>
<rect x="825" y="655" width="3" height="11" fill="#fff"/>
<rect x="834" y="638" width="1" height="24" fill="#000"/>
<rect x="832" y="641" width="5" height="14" fill="#000"/>
<rect x="833" y="642" width="3" height="12" fill="#fff"/>
<rect x="842" y="637" width="1" height="16" fill="#000"/>
<rect x="840" y="639" width="5" height="2" fill="#000"/>
<rect x="850" y="639" width="1" height="22" fill="#000"/>
<rect x="848" y="640" width="5" height="2" fill="#000"/>
<rect x="858" y="631" width="1" height="17" fill="#000"/>
<rect x="856" y="637" width="5" height="5" fill="#000"/>
<rect x="857" y="638" width="3" height="3" fill="#fff"/>
<rect x="866" y="633" width="1" height="35" fill="#000"/>
<rect x="864" y="637" width="5" height="11" fill="#000"/>
<rect x="874" y="613" width="1" height="39" fill="#000"/>
<rect x="872" y="614" width="5" height="33" fill="#000"/>
<rect x="873" y="615" width="3" height="31" fill="#fff"/>
<rect x="882" y="569" width="1" height="46" fill="#000"/>
<rect x="880" y="590" width="5" height="23" fill="#000"/>
<rect x="881" y="591" width="3" height="21" fill="#fff"/>
<rect x="890" y="581" width="1" height="54" fill="#000"/>
<rect x="888" y="581" width="5" height="18" fill="#000"/>
<rect x="898" y="570" width="1" height="45" fill="#000"/>
<rect x="896" y="572" width="5" height="26" fill="#000"/>
<rect x="897" y="573" width="3" height="24" fill="#fff"/>
<rect x="906" y="571" width="1" height="25" fill="#000"/>
<rect x="904" y="572" width="5" height="16" fill="#000"/>
<rect x="914" y="581" width="1" height="25" fill="#000"/>
<rect x="912" y="587" width="5" height="3" fill="#000"/>
<rect x="922" y="572" width="1" height="26" fill="#000"/>
<rect x="920" y="581" width="5" height="12" fill="#000"/>
<rect x="921" y="582" width="3" height="10" fill="#fff"/>
<rect x="930" y="573" width="1" height="16" fill="#000"/>
<rect x="928" y="581" width="5" height="2" fill="#000"/>
<rect x="938" y="578" width="1" height="13" fill="#000"/>
<rect x="936" y="580" width="5" height="3" fill="#000"/>
<rect x="937" y="581" width="3" height="1" fill="#fff"/>
<rect x="946" y="543" width="1" height="47" fill="#000"/>
<rect x="944" y="545" width="5" height="30" fill="#000"/>
<rect x="945" y="546" width="3" height="28" fill="#fff"/>
<rect x="954" y="486" width="1" height="62" fill="#000"/>
<rect x="952" y="517" width="5" height="29" fill="#000"/>
<rect x="953" y="518" width="3" height="27" fill="#fff"/>
<rect x="962" y="516" width="1" height="29" fill="#000"/>
<rect x="960" y="516" width="5" height="27" fill="#000"/>
<rect x="970" y="493" width="1" height="51" fill="#000"/>
<rect x="968" y="493" width="5" height="49" fill="#000"/>
<rect x="969" y="494" width="3" height="47" fill="#fff"/>
<rect x="978" y="476" width="1" height="19" fill="#000"/>
<rect x="976" y="485" width="5" height="9" fill="#000"/>
<rect x="977" y="486" width="3" height="7" fill="#fff"/>
<rect x="986" y="455" width="1" height="34" fill="#000"/>
<rect x="984" y="462" width="5" height="25" fill="#000"/>
<rect x="985" y="463" width="3" height="23" fill="#fff"/>
<rect x="994" y="433" width="1" height="32" fill="#000"/>
<rect x="992" y="437" width="5" height="26" fill="#000"/>
<rect x="993" y="438" width="3" height="24" fill="#fff"/>
<rect x="1002" y="419" width="1" height="50" fill="#000"/>
<rect x="1000" y="437" width="5" height="18" fill="#000"/>
<rect x="1010" y="448" width="1" height="35" fill="#000"/>
<rect x="1008" y="449" width="5" height="6" fill="#000"/>
<rect x="1009" y="450" width="3" height="4" fill="#fff"/>
<rect x="1018" y="423" width="1" height="41" fill="#000"/>
<rect x="1016" y="429" width="5" height="23" fill="#000"/>
<rect x="1017" y="430" width="3" height="21" fill="#fff"/>
<rect x="1026" y="407" width="1" height="40" fill="#000"/>
<rect x="1024" y="427" width="5" height="3" fill="#000"/>
<rect x="1025" y="428" width="3" height="1" fill="#fff"/>
<rect x="1034" y="420" width="1" height="23" fill="#000"/>
<rect x="1032" y="427" width="5" height="1" fill="#000"/>
<rect x="1042" y="415" width="1" height="39" fill="#000"/>
<rect x="1040" y="427" width="5" height="1" fill="#000"/>
<rect x="1050" y="426" width="1" height="32" fill="#000"/>
<rect x="1048" y="428" width="5" height="11" fill="#000"/>
<rect x="1058" y="430" width="1" height="41" fill="#000"/>
<rect x="1056" y="438" width="5" height="12" fill="#000"/>
<rect x="1066" y="414" width="1" height="55" fill="#000"/>
<rect x="1064" y="421" width="5" height="29" fill="#000"/>
<rect x="1065" y="422" width="3" height="27" fill="#fff"/>
<rect x="1074" y="382" width="1" height="51" fill="#000"/>
<rect x="1072" y="392" width="5" height="30" fill="#000"/>
<rect x="1073" y="393" width="3" height="28" fill="#fff"/>
<rect x="1082" y="368" width="1" height="44" fill="#000"/>
<rect x="1080" y="372" width="5" height="20" fill="#000"/>
<rect x="1081" y="373" width="3" height="18" fill="#fff"/>
<rect x="1090" y="351" width="1" height="67" fill="#000"/>
<rect x="1088" y="372" width="5" height="24" fill="#000"/>
<rect x="1098" y="382" width="1" height="22" fill="#000"/>
<rect x="1096" y="385" width="5" height="10" fill="#000"/>
<rect x="1097" y="386" width="3" height="8" fill="#fff"/>
<rect x="1106" y="377" width="1" height="14" fill="#000"/>
<rect x="1104" y="383" width="5" height="1" fill="#000"/>
<rect x="1114" y="365" width="1" height="19" fill="#000"/>
<rect x="1112" y="381" width="5" height="3" fill="#000"/>
<rect x="1113" y="382" width="3" height="1" fill="#fff"/>
<rect x="1122" y="373" width="1" height="14" fill="#000"/>
<rect x="1120" y="376" width="5" height="5" fill="#000"/>
<rect x="1121" y="377" width="3" height="3" fill="#fff"/>
<rect x="1130" y="334" width="1" height="52" fill="#000"/>
<rect x="1128" y="369" width="5" height="10" fill="#000"/>
<rect x="1129" y="370" width="3" height="8" fill="#fff"/>
<rect x="1138" y="344" width="1" height="31" fill="#000"/>
<rect x="1136" y="353" width="5" height="17" fill="#000"/>
<rect x="1137" y="354" width="3" height="15" fill="#fff"/>
<rect x="1146" y="331" width="1" height="45" fill="#000"/>
<rect x="1144" y="353" width="5" height="19" fill="#000"/>
<rect x="1154" y="368" width="1" height="23" fill="#000"/>
<rect x="1152" y="371" width="5" height="14" fill="#000"/>
<rect x="1162" y="360" width="1" height="27" fill="#000"/>
<rect x="1160" y="366" width="5" height="19" fill="#000"/>
<rect x="1161" y="367" width="3" height="17" fill="#fff"/>
<rect x="1170" y="338" width="1" height="39" fill="#000"/>
<rect x="1168" y="342" width="5" height="25" fill="#000"/>
<rect x="1169" y="343" width="3" height="23" fill="#fff"/>
<rect x="1178" y="332" width="1" height="15" fill="#000"/>
<rect x="1176" y="336" width="5" height="7" fill="#000"/>
<rect x="1177" y="337" width="3" height="5" fill="#fff"/>
<rect x="1186" y="333" width="1" height="46" fill="#000"/>
<rect x="1184" y="336" width="5" height="30" fill="#000"/>
<rect x="1194" y="362" width="1" height="35" fill="#000"/>
<rect x="1192" y="365" width="5" height="28" fill="#000"/>
<rect x="1202" y="389" width="1" height="36" fill="#000"/>
<rect x="1200" y="392" width="5" height="26" fill="#000"/>
<rect x="1210" y="395" width="1" height="36" fill="#000"/>
<rect x="1208" y="402" width="5" height="17" fill="#000"/>
<rect x="1209" y="403" width="3" height="15" fill="#fff"/>
<rect x="1218" y="369" width="1" height="34" fill="#000"/>
<rect x="1216" y="392" width="5" height="12" fill="#000"/>
<rect x="1217" y="393" width="3" height="10" fill="#fff"/>
<rect x="1226" y="371" width="1" height="24" fill="#000"/>
<rect x="1224" y="379" width="5" height="13" fill="#000"/>
<rect x="1225" y="380" width="3" height="11" fill="#fff"/>
<rect x="1234" y="354" width="1" height="36" fill="#000"/>
<rect x="1232" y="360" width="5" height="19" fill="#000"/>
<rect x="1233" y="361" width="3" height="17" fill="#fff"/>
<rect x="1242" y="324" width="1" height="43" fill="#000"/>
<rect x="1240" y="325" width="5" height="36" fill="#000"/>
<rect x="1241" y="326" width="3" height="34" fill="#fff"/>
<rect x="1250" y="309" width="1" height="42" fill="#000"/>
<rect x="1248" y="325" width="5" height="2" fill="#000"/>
<rect x="1258" y="306" width="1" height="49" fill="#000"/>
<rect x="1256" y="309" width="5" height="18" fill="#000"/>
<rect x="1257" y="310" width="3" height="16" fill="#fff"/>
<rect x="1266" y="299" width="1" height="76" fill="#000"/>
<rect x="1264" y="309" width="5" height="54" fill="#000"/>
<rect x="1274" y="325" width="1" height="46" fill="#000"/>
<rect x="1272" y="333" width="5" height="28" fill="#000"/>
<rect x="1273" y="334" width="3" height="26" fill="#fff"/>
<rect x="1282" y="303" width="1" height="32" fill="#000"/>
<rect x="1280" y="322" width="5" height="12" fill="#000"/>
<rect x="1281" y="323" width="3" height="10" fill="#fff"/>
<rect x="1290" y="313" width="1" height="28" fill="#000"/>
<rect x="1288" y="321" width="5" height="2" fill="#000"/>
<rect x="1298" y="315" width="1" height="14" fill="#000"/>
<rect x="1296" y="321" width="5" height="4" fill="#000"/>
<rect x="1306" y="306" width="1" height="18" fill="#000"/>
<rect x="1304" y="312" width="5" height="12" fill="#000"/>
<rect x="1305" y="313" width="3" height="10" fill="#fff"/>
<rect x="1314" y="293" width="1" height="22" fill="#000"/>
<rect x="1312" y="298" width="5" height="16" fill="#000"/>
<rect x="1313" y="299" width="3" height="14" fill="#fff"/>
<rect x="1322" y="280" width="1" height="21" fill="#000"/>
<rect x="1320" y="285" width="5" height="14" fill="#000"/>
<rect x="1321" y="286" width="3" height="12" fill="#fff"/>
<rect x="1330" y="271" width="1" height="27" fill="#000"/>
<rect x="1328" y="285" width="5" height="6" fill="#000"/>
<rect x="1338" y="267" width="1" height="45" fill="#000"/>
<rect x="1336" y="268" width="5" height="22" fill="#000"/>
<rect x="1337" y="269" width="3" height="20" fill="#fff"/>
<rect x="1346" y="237" width="1" height="44" fill="#000"/>
<rect x="1344" y="237" width="5" height="31" fill="#000"/>
<rect x="1345" y="238" width="3" height="29" fill="#fff"/>
<rect x="1354" y="224" width="1" height="21" fill="#000"/>
<rect x="1352" y="230" width="5" height="7" fill="#000"/>
<rect x="1353" y="231" width="3" height="5" fill="#fff"/>
<rect x="1362" y="196" width="1" height="34" fill="#000"/>
<rect x="1360" y="196" width="5" height="32" fill="#000"/>
<rect x="1361" y="197" width="3" height="30" fill="#fff"/>
<rect x="1370" y="168" width="1" height="35" fill="#000"/>
<rect x="1368" y="191" width="5" height="6" fill="#000"/>
<rect x="1369" y="192" width="3" height="4" fill="#fff"/>
<rect x="1378" y="179" width="1" height="33" fill="#000"/>
<rect x="1376" y="183" width="5" height="7" fill="#000"/>
<rect x="1377" y="184" width="3" height="5" fill="#fff"/>
<rect x="1386" y="162" width="1" height="22" fill="#000"/>
<rect x="1384" y="177" width="5" height="6" fill="#000"/>
<rect x="1385" y="178" width="3" height="4" fill="#fff"/>
<rect x="1394" y="159" width="1" height="19" fill="#000"/>
<rect x="1392" y="170" width="5" height="5" fill="#000"/>
<rect x="1393" y="171" width="3" height="3" fill="#fff"/>
<rect x="1402" y="134" width="1" height="52" fill="#000"/>
<rect x="1400" y="134" width="5" height="36" fill="#000"/>
<rect x="1401" y="135" width="3" height="34" fill="#fff"/>
<rect x="1410" y="134" width="1" height="44" fill="#000"/>
<rect x="1408" y="134" width="5" height="35" fill="#000"/>
<rect x="1418" y="165" width="1" height="17" fill="#000"/>
<rect x="1416" y="165" width="5" height="3" fill="#000"/>
<rect x="1417" y="166" width="3" height="1" fill="#fff"/>
<rect x="1426" y="142" width="1" height="43" fill="#000"/>
<rect x="1424" y="160" width="5" height="5" fill="#000"/>
<rect x="1425" y="161" width="3" height="3" fill="#fff"/>
<rect x="1434" y="134" width="1" height="64" fill="#000"/>
<rect x="1432" y="160" width="5" height="2" fill="#000"/>
<rect x="1442" y="135" width="1" height="38" fill="#000"/>
<rect x="1440" y="137" width="5" height="29" fill="#000"/>
<rect x="1441" y="138" width="3" height="27" fill="#fff"/>
<rect x="1450" y="133" width="1" height="35" fill="#000"/>
<rect x="1448" y="137" width="5" height="8" fill="#000"/>
<rect x="1458" y="107" width="1" height="41" fill="#000"/>
<rect x="1456" y="115" width="5" height="30" fill="#000"/>
<rect x="1457" y="116" width="3" height="28" fill="#fff"/>
<rect x="1466" y="110" width="1" height="41" fill="#000"/>
<rect x="1464" y="115" width="5" height="14" fill="#000"/>
<rect x="1474" y="123" width="1" height="41" fill="#000"/>
<rect x="1472" y="129" width="5" height="5" fill="#000"/>
<rect x="1482" y="120" width="1" height="62" fill="#000"/>
<rect x="1480" y="132" width="5" height="15" fill="#000"/>
<rect x="1490" y="142" width="1" height="22" fill="#000"/>
<rect x="1488" y="146" width="5" height="10" fill="#000"/>
<rect x="1498" y="143" width="1" height="80" fill="#000"/>
<rect x="1496" y="157" width="5" height="55" fill="#000"/>
<rect x="1506" y="209" width="1" height="58" fill="#000"/>
<rect x="1504" y="211" width="5" height="27" fill="#000"/>
<rect x="1514" y="192" width="1" height="53" fill="#000"/>
<rect x="1512" y="206" width="5" height="32" fill="#000"/>
<rect x="1513" y="207" width="3" height="30" fill="#fff"/>
<rect x="1522" y="170" width="1" height="78" fill="#000"/>
<rect x="1520" y="207" width="5" height="9" fill="#000"/>
<rect x="1530" y="211" width="1" height="51" fill="#000"/>
<rect x="1528" y="215" width="5" height="4" fill="#000"/>
<rect x="1538" y="189" width="1" height="34" fill="#000"/>
<rect x="1536" y="195" width="5" height="24" fill="#000"/>
<rect x="1537" y="196" width="3" height="22" fill="#fff"/>
<rect x="1546" y="157" width="1" height="39" fill="#000"/>
<rect x="1544" y="163" width="5" height="33" fill="#000"/>
<rect x="1545" y="164" width="3" height="31" fill="#fff"/>
<rect x="1554" y="149" width="1" height="27" fill="#000"/>
<rect x="1552" y="160" width="5" height="4" fill="#000"/>
<rect x="1553" y="161" width="3" height="2" fill="#fff"/>
<rect x="1562" y="157" width="1" height="50" fill="#000"/>
<rect x="1560" y="160" width="5" height="39" fill="#000"/>
<rect x="1570" y="180" width="1" height="22" fill="#000"/>
<rect x="1568" y="183" width="5" height="16" fill="#000"/>
<rect x="1569" y="184" width="3" height="14" fill="#fff"/>
<rect x="1578" y="159" width="1" height="28" fill="#000"/>
<rect x="1576" y="165" width="5" height="19" fill="#000"/>
<rect x="1577" y="166" width="3" height="17" fill="#fff"/>
<rect x="1586" y="154" width="1" height="23" fill="#000"/>
<rect x="1584" y="165" width="5" height="3" fill="#000"/>
<rect x="1594" y="148" width="1" height="23" fill="#000"/>
<rect x="1592" y="148" width="5" height="19" fill="#000"/>
<rect x="1593" y="149" width="3" height="17" fill="#fff"/>
<rect x="1602" y="142" width="1" height="35" fill="#000"/>
<rect x="1600" y="148" width="5" height="2" fill="#000"/>
<rect x="1610" y="123" width="1" height="44" fill="#000"/>
<rect x="1608" y="123" width="5" height="26" fill="#000"/>
<rect x="1609" y="124" width="3" height="24" fill="#fff"/>
<rect x="1618" y="121" width="1" height="101" fill="#000"/>
<rect x="1616" y="123" width="5" height="99" fill="#000"/>
<rect x="1626" y="189" width="1" height="69" fill="#000"/>
<rect x="1624" y="204" width="5" height="18" fill="#000"/>
<rect x="1625" y="205" width="3" height="16" fill="#fff"/>
<rect x="1634" y="191" width="1" height="61" fill="#000"/>
<rect x="1632" y="206" width="5" height="25" fill="#000"/>
<rect x="1642" y="210" width="1" height="157" fill="#000"/>
<rect x="1640" y="230" width="5" height="125" fill="#000"/>
<rect x="1650" y="339" width="1" height="81" fill="#000"/>
<rect x="1648" y="353" width="5" height="53" fill="#000"/>
<rect x="1658" y="355" width="1" height="52" fill="#000"/>
<rect x="1656" y="386" width="5" height="20" fill="#000"/>
<rect x="1657" y="387" width="3" height="18" fill="#fff"/>
<rect x="1666" y="318" width="1" height="75" fill="#000"/>
<rect x="1664" y="343" width="5" height="43" fill="#000"/>
<rect x="1665" y="344" width="3" height="41" fill="#fff"/>
<rect x="1674" y="326" width="1" height="18" fill="#000"/>
<rect x="1672" y="335" width="5" height="8" fill="#000"/>
<rect x="1673" y="336" width="3" height="6" fill="#fff"/>
<rect x="1682" y="318" width="1" height="67" fill="#000"/>
<rect x="1680" y="334" width="5" height="3" fill="#000"/>
<rect x="1690" y="294" width="1" height="46" fill="#000"/>
<rect x="1688" y="297" width="5" height="41" fill="#000"/>
<rect x="1689" y="298" width="3" height="39" fill="#fff"/>
<rect x="1698" y="284" width="1" height="26" fill="#000"/>
<rect x="1696" y="294" width="5" height="4" fill="#000"/>
<rect x="1697" y="295" width="3" height="2" fill="#fff"/>
<rect x="1706" y="290" width="1" height="63" fill="#000"/>
<rect x="1704" y="294" width="5" height="49" fill="#000"/>
<rect x="1714" y="306" width="1" height="37" fill="#000"/>
<rect x="1712" y="328" width="5" height="15" fill="#000"/>
<rect x="1713" y="329" width="3" height="13" fill="#fff"/>
<rect x="1722" y="326" width="1" height="50" fill="#000"/>
<rect x="1720" y="328" width="5" height="46" fill="#000"/>
<rect x="1730" y="360" width="1" height="55" fill="#000"/>
<rect x="1728" y="362" width="5" height="12" fill="#000"/>
<rect x="1729" y="363" width="3" height="10" fill="#fff"/>
<rect x="1738" y="330" width="1" height="33" fill="#000"/>
<rect x="1736" y="338" width="5" height="25" fill="#000"/>
<rect x="1737" y="339" width="3" height="23" fill="#fff"/>
<rect x="1746" y="335" width="1" height="37" fill="#000"/>
<rect x="1744" y="339" width="5" height="18" fill="#000"/>
<rect x="1754" y="335" width="1" height="65" fill="#000"/>
<rect x="1752" y="346" width="5" height="11" fill="#000"/>
<rect x="1753" y="347" width="3" height="9" fill="#fff"/>
<rect x="1762" y="286" width="1" height="66" fill="#000"/>
<rect x="1760" y="291" width="5" height="56" fill="#000"/>
<rect x="1761" y="292" width="3" height="54" fill="#fff"/>
<rect x="1770" y="251" width="1" height="42" fill="#000"/>
<rect x="1768" y="281" width="5" height="10" fill="#000"/>
<rect x="1769" y="282" width="3" height="8" fill="#fff"/>
<rect x="1778" y="269" width="1" height="25" fill="#000"/>
<rect x="1776" y="281" width="5" height="5" fill="#000"/>
<rect x="1786" y="270" width="1" height="46" fill="#000"/>
<rect x="1784" y="286" width="5" height="19" fill="#000"/>
<rect x="1794" y="287" width="1" height="38" fill="#000"/>
<rect x="1792" y="304" width="5" height="5" fill="#000"/>
<rect x="1802" y="275" width="1" height="62" fill="#000"/>
<rect x="1800" y="308" width="5" height="15" fill="#000"/>
<rect x="1810" y="285" width="1" height="65" fill="#000"/>
<rect x="1808" y="296" width="5" height="28" fill="#000"/>
<rect x="1809" y="297" width="3" height="26" fill="#fff"/>
<rect x="1818" y="207" width="1" height="95" fill="#000"/>
<rect x="1816" y="275" width="5" height="23" fill="#000"/>
<rect x="1817" y="276" width="3" height="21" fill="#fff"/>
<rect x="1826" y="273" width="1" height="59" fill="#000"/>
<rect x="1824" y="275" width="5" height="41" fill="#000"/>
<rect x="1834" y="291" width="1" height="47" fill="#000"/>
<rect x="1832" y="297" width="5" height="19" fill="#000"/>
<rect x="1833" y="298" width="3" height="17" fill="#fff"/>
<rect x="1842" y="244" width="1" height="68" fill="#000"/>
<rect x="1840" y="272" width="5" height="25" fill="#000"/>
<rect x="1841" y="273" width="3" height="23" fill="#fff"/>
<g fill="#1466c4"><rect x="3" y="865" width="1" height="1"/><rect x="4" y="865" width="1" height="1"/><rect x="5" y="864" width="1" height="1"/><rect x="9" y="863" width="1" height="1"/><rect x="10" y="862" width="1" height="1"/><rect x="11" y="862" width="1" height="1"/><rect x="15" y="860" width="1" height="1"/><rect x="16" y="860" width="1" height="1"/><rect x="17" y="860" width="1" height="1"/><rect x="21" y="858" width="1" height="1"/><rect x="22" y="858" width="1" height="1"/><rect x="23" y="857" width="1" height="1"/><rect x="27" y="856" width="1" height="1"/><rect x="28" y="855" width="1" height="1"/><rect x="29" y="855" width="1" height="1"/><rect x="33" y="854" width="1" height="1"/><rect x="34" y="853" width="1" height="1"/><rect x="35" y="853" width="1" height="1"/><rect x="39" y="851" width="1" height="1"/><rect x="40" y="851" width="1" height="1"/><rect x="41" y="850" width="1" height="1"/><rect x="45" y="849" width="1" height="1"/><rect x="46" y="849" width="1" height="1"/><rect x="47" y="848" width="1" height="1"/><rect x="98" y="770" width="1" height="1"/><rect x="99" y="769" width="1" height="1"/><rect x="100" y="768" width="1" height="1"/><rect x="104" y="765" width="1" height="1"/><rect x="105" y="764" width="1" height="1"/><rect x="106" y="763" width="1" height="1"/><rect x="110" y="759" width="1" height="1"/><rect x="111" y="758" width="1" height="1"/><rect x="112" y="757" width="1" height="1"/><rect x="116" y="754" width="1" height="1"/><rect x="117" y="753" width="1" height="1"/><rect x="118" y="752" width="1" height="1"/><rect x="122" y="748" width="1" height="1"/><rect x="123" y="747" width="1" height="1"/><rect x="124" y="746" width="1" height="1"/><rect x="128" y="743" width="1" height="1"/><rect x="129" y="742" width="1" height="1"/><rect x="130" y="741" width="1" height="1"/><rect x="178" y="734" width="1" height="1"/><rect x="179" y="733" width="1" height="1"/><rect x="180" y="733" width="1" height="1"/><rect x="184" y="730" width="1" height="1"/><rect x="185" y="730" width="1" height="1"/><rect x="186" y="729" width="1" height="1"/><rect x="190" y="727" width="1" height="1"/><rect x="191" y="726" width="1" height="1"/><rect x="192" y="726" width="1" height="1"/><rect x="196" y="723" width="1" height="1"/><rect x="197" y="723" width="1" height="1"/><rect x="198" y="722" width="1" height="1"/><rect x="202" y="720" width="1" height="1"/><rect x="203" y="719" width="1" height="1"/><rect x="204" y="718" width="1" height="1"/><rect x="208" y="716" width="1" height="1"/><rect x="209" y="715" width="1" height="1"/><rect x="210" y="715" width="1" height="1"/><rect x="214" y="712" width="1" height="1"/><rect x="215" y="712" width="1" height="1"/><rect x="216" y="711" width="1" height="1"/><rect x="220" y="709" width="1" height="1"/><rect x="221" y="708" width="1" height="1"/><rect x="222" y="707" width="1" height="1"/><rect x="226" y="705" width="1" height="1"/><rect x="346" y="668" width="1" height="1"/><rect x="347" y="668" width="1" height="1"/><rect x="348" y="667" width="1" height="1"/><rect x="352" y="666" width="1" height="1"/><rect x="353" y="665" width="1" height="1"/><rect x="354" y="665" width="1" height="1"/><rect x="358" y="663" width="1" height="1"/><rect x="359" y="663" width="1" height="1"/><rect x="360" y="662" width="1" height="1"/><rect x="364" y="661" width="1" height="1"/><rect x="365" y="660" width="1" height="1"/><rect x="366" y="660" width="1" height="1"/><rect x="370" y="658" width="1" height="1"/><rect x="371" y="658" width="1" height="1"/><rect x="372" y="657" width="1" height="1"/><rect x="376" y="656" width="1" height="1"/><rect x="377" y="655" width="1" height="1"/><rect x="378" y="655" width="1" height="1"/><rect x="382" y="653" width="1" height="1"/><rect x="383" y="653" width="1" height="1"/><rect x="384" y="653" width="1" height="1"/><rect x="388" y="651" width="1" height="1"/><rect x="389" y="651" width="1" height="1"/><rect x="390" y="650" width="1" height="1"/><rect x="394" y="648" width="1" height="1"/><rect x="395" y="648" width="1" height="1"/><rect x="396" y="648" width="1" height="1"/><rect x="400" y="646" width="1" height="1"/><rect x="401" y="646" width="1" height="1"/><rect x="402" y="645" width="1" height="1"/><rect x="406" y="644" width="1" height="1"/><rect x="407" y="643" width="1" height="1"/><rect x="408" y="643" width="1" height="1"/><rect x="682" y="595" width="1" height="1"/><rect x="682" y="594" width="1" height="1"/><rect x="683" y="593" width="1" height="1"/><rect x="684" y="589" width="1" height="1"/><rect x="684" y="588" width="1" height="1"/><rect x="684" y="587" width="1" height="1"/><rect x="685" y="583" width="1" height="1"/><rect x="686" y="582" width="1" height="1"/><rect x="686" y="581" width="1" height="1"/><rect x="687" y="577" width="1" height="1"/><rect x="687" y="576" width="1" height="1"/><rect x="688" y="575" width="1" height="1"/><rect x="689" y="571" width="1" height="1"/><rect x="689" y="570" width="1" height="1"/><rect x="689" y="569" width="1" height="1"/><rect x="698" y="586" width="1" height="1"/><rect x="698" y="587" width="1" height="1"/><rect x="698" y="588" width="1" height="1"/><rect x="698" y="592" width="1" height="1"/><rect x="699" y="593" width="1" height="1"/><rect x="699" y="594" width="1" height="1"/><rect x="699" y="598" width="1" height="1"/><rect x="699" y="599" width="1" height="1"/><rect x="699" y="600" width="1" height="1"/><rect x="699" y="604" width="1" height="1"/><rect x="699" y="605" width="1" height="1"/><rect x="700" y="606" width="1" height="1"/><rect x="700" y="610" width="1" height="1"/><rect x="700" y="611" width="1" height="1"/><rect x="700" y="612" width="1" height="1"/><rect x="700" y="616" width="1" height="1"/><rect x="700" y="617" width="1" height="1"/><rect x="700" y="618" width="1" height="1"/><rect x="701" y="622" width="1" height="1"/><rect x="701" y="623" width="1" height="1"/><rect x="701" y="624" width="1" height="1"/><rect x="701" y="628" width="1" height="1"/><rect x="701" y="629" width="1" height="1"/><rect x="701" y="630" width="1" height="1"/><rect x="702" y="634" width="1" height="1"/><rect x="702" y="635" width="1" height="1"/><rect x="702" y="636" width="1" height="1"/><rect x="702" y="640" width="1" height="1"/><rect x="702" y="641" width="1" height="1"/><rect x="702" y="642" width="1" height="1"/><rect x="703" y="646" width="1" height="1"/><rect x="703" y="647" width="1" height="1"/><rect x="703" y="648" width="1" height="1"/><rect x="703" y="652" width="1" height="1"/><rect x="703" y="653" width="1" height="1"/><rect x="703" y="654" width="1" height="1"/><rect x="704" y="658" width="1" height="1"/><rect x="704" y="659" width="1" height="1"/><rect x="704" y="660" width="1" height="1"/><rect x="704" y="664" width="1" height="1"/><rect x="704" y="665" width="1" height="1"/><rect x="704" y="666" width="1" height="1"/><rect x="704" y="670" width="1" height="1"/><rect x="705" y="671" width="1" height="1"/><rect x="705" y="672" width="1" height="1"/><rect x="705" y="676" width="1" height="1"/><rect x="705" y="677" width="1" height="1"/><rect x="705" y="678" width="1" height="1"/><rect x="705" y="682" width="1" height="1"/><rect x="705" y="683" width="1" height="1"/><rect x="706" y="684" width="1" height="1"/><rect x="706" y="688" width="1" height="1"/><rect x="706" y="689" width="1" height="1"/><rect x="706" y="690" width="1" height="1"/><rect x="746" y="679" width="1" height="1"/><rect x="747" y="678" width="1" height="1"/><rect x="748" y="677" width="1" height="1"/><rect x="751" y="673" width="1" height="1"/><rect x="752" y="672" width="1" height="1"/><rect x="752" y="671" width="1" height="1"/><rect x="756" y="667" width="1" height="1"/><rect x="756" y="666" width="1" height="1"/><rect x="757" y="665" width="1" height="1"/><rect x="760" y="661" width="1" height="1"/><rect x="761" y="660" width="1" height="1"/><rect x="762" y="659" width="1" height="1"/><rect x="765" y="655" width="1" height="1"/><rect x="766" y="654" width="1" height="1"/><rect x="767" y="653" width="1" height="1"/><rect x="770" y="649" width="1" height="1"/><rect x="850" y="641" width="1" height="1"/><rect x="851" y="640" width="1" height="1"/><rect x="852" y="639" width="1" height="1"/><rect x="855" y="635" width="1" height="1"/><rect x="856" y="634" width="1" height="1"/><rect x="857" y="633" width="1" height="1"/><rect x="860" y="629" width="1" height="1"/><rect x="861" y="628" width="1" height="1"/><rect x="862" y="627" width="1" height="1"/><rect x="865" y="623" width="1" height="1"/><rect x="866" y="622" width="1" height="1"/><rect x="867" y="621" width="1" height="1"/><rect x="870" y="617" width="1" height="1"/><rect x="871" y="616" width="1" height="1"/><rect x="872" y="615" width="1" height="1"/><rect x="882" y="614" width="1" height="1"/><rect x="882" y="613" width="1" height="1"/><rect x="882" y="612" width="1" height="1"/><rect x="882" y="608" width="1" height="1"/><rect x="882" y="607" width="1" height="1"/><rect x="882" y="606" width="1" height="1"/><rect x="882" y="602" width="1" height="1"/><rect x="882" y="601" width="1" height="1"/><rect x="882" y="600" width="1" height="1"/><rect x="882" y="596" width="1" height="1"/><rect x="882" y="595" width="1" height="1"/><rect x="882" y="594" width="1" height="1"/><rect x="882" y="590" width="1" height="1"/><rect x="882" y="589" width="1" height="1"/><rect x="882" y="588" width="1" height="1"/><rect x="898" y="600" width="1" height="1"/><rect x="898" y="599" width="1" height="1"/><rect x="898" y="598" width="1" height="1"/><rect x="898" y="594" width="1" height="1"/><rect x="898" y="593" width="1" height="1"/><rect x="898" y="592" width="1" height="1"/><rect x="898" y="588" width="1" height="1"/><rect x="898" y="587" width="1" height="1"/><rect x="898" y="586" width="1" height="1"/><rect x="898" y="582" width="1" height="1"/><rect x="898" y="581" width="1" height="1"/><rect x="898" y="580" width="1" height="1"/><rect x="898" y="576" width="1" height="1"/><rect x="898" y="575" width="1" height="1"/><rect x="898" y="574" width="1" height="1"/><rect x="898" y="570" width="1" height="1"/><rect x="914" y="589" width="1" height="1"/><rect x="915" y="588" width="1" height="1"/><rect x="916" y="587" width="1" height="1"/><rect x="920" y="584" width="1" height="1"/><rect x="921" y="583" width="1" height="1"/><rect x="922" y="582" width="1" height="1"/><rect x="926" y="578" width="1" height="1"/><rect x="927" y="577" width="1" height="1"/><rect x="928" y="576" width="1" height="1"/><rect x="932" y="573" width="1" height="1"/><rect x="933" y="572" width="1" height="1"/><rect x="934" y="571" width="1" height="1"/><rect x="938" y="567" width="1" height="1"/><rect x="939" y="566" width="1" height="1"/><rect x="940" y="565" width="1" height="1"/><rect x="944" y="562" width="1" height="1"/><rect x="945" y="561" width="1" height="1"/><rect x="946" y="560" width="1" height="1"/><rect x="1250" y="327" width="1" height="1"/><rect x="1251" y="326" width="1" height="1"/><rect x="1251" y="325" width="1" height="1"/><rect x="1253" y="321" width="1" height="1"/><rect x="1254" y="320" width="1" height="1"/><rect x="1254" y="319" width="1" height="1"/><rect x="1256" y="315" width="1" height="1"/><rect x="1257" y="314" width="1" height="1"/><rect x="1257" y="313" width="1" height="1"/><rect x="1260" y="309" width="1" height="1"/><rect x="1260" y="308" width="1" height="1"/><rect x="1261" y="307" width="1" height="1"/><rect x="1263" y="303" width="1" height="1"/><rect x="1263" y="302" width="1" height="1"/><rect x="1264" y="301" width="1" height="1"/><rect x="1266" y="297" width="1" height="1"/><rect x="1386" y="184" width="1" height="1"/><rect x="1387" y="183" width="1" height="1"/><rect x="1387" y="182" width="1" height="1"/><rect x="1389" y="178" width="1" height="1"/><rect x="1390" y="177" width="1" height="1"/><rect x="1390" y="176" width="1" height="1"/><rect x="1392" y="172" width="1" height="1"/><rect x="1393" y="171" width="1" height="1"/><rect x="1393" y="170" width="1" height="1"/><rect x="1396" y="166" width="1" height="1"/><rect x="1396" y="165" width="1" height="1"/><rect x="1397" y="164" width="1" height="1"/><rect x="1399" y="160" width="1" height="1"/><rect x="1399" y="159" width="1" height="1"/><rect x="1400" y="158" width="1" height="1"/><rect x="1402" y="154" width="1" height="1"/><rect x="1434" y="161" width="1" height="1"/><rect x="1435" y="160" width="1" height="1"/><rect x="1435" y="159" width="1" height="1"/><rect x="1437" y="155" width="1" height="1"/><rect x="1438" y="154" width="1" height="1"/><rect x="1438" y="153" width="1" height="1"/><rect x="1440" y="149" width="1" height="1"/><rect x="1441" y="148" width="1" height="1"/><rect x="1441" y="147" width="1" height="1"/><rect x="1443" y="143" width="1" height="1"/><rect x="1444" y="142" width="1" height="1"/><rect x="1444" y="141" width="1" height="1"/><rect x="1446" y="137" width="1" height="1"/><rect x="1447" y="136" width="1" height="1"/><rect x="1447" y="135" width="1" height="1"/><rect x="1449" y="131" width="1" height="1"/><rect x="1450" y="130" width="1" height="1"/><rect x="1466" y="116" width="1" height="1"/><rect x="1466" y="117" width="1" height="1"/><rect x="1467" y="118" width="1" height="1"/><rect x="1468" y="122" width="1" height="1"/><rect x="1468" y="123" width="1" height="1"/><rect x="1468" y="124" width="1" height="1"/><rect x="1470" y="128" width="1" height="1"/><rect x="1470" y="129" width="1" height="1"/><rect x="1470" y="130" width="1" height="1"/><rect x="1471" y="134" width="1" height="1"/><rect x="1472" y="135" width="1" height="1"/><rect x="1472" y="136" width="1" height="1"/><rect x="1473" y="140" width="1" height="1"/><rect x="1473" y="141" width="1" height="1"/><rect x="1474" y="142" width="1" height="1"/><rect x="1475" y="146" width="1" height="1"/><rect x="1475" y="147" width="1" height="1"/><rect x="1476" y="148" width="1" height="1"/><rect x="1477" y="152" width="1" height="1"/><rect x="1477" y="153" width="1" height="1"/><rect x="1477" y="154" width="1" height="1"/><rect x="1479" y="158" width="1" height="1"/><rect x="1479" y="159" width="1" height="1"/><rect x="1479" y="160" width="1" height="1"/><rect x="1480" y="164" width="1" height="1"/><rect x="1481" y="165" width="1" height="1"/><rect x="1481" y="166" width="1" height="1"/><rect x="1482" y="170" width="1" height="1"/><rect x="1482" y="171" width="1" height="1"/><rect x="1483" y="172" width="1" height="1"/><rect x="1484" y="176" width="1" height="1"/><rect x="1484" y="177" width="1" height="1"/><rect x="1485" y="178" width="1" height="1"/><rect x="1486" y="182" width="1" height="1"/><rect x="1486" y="183" width="1" height="1"/><rect x="1486" y="184" width="1" height="1"/><rect x="1488" y="188" width="1" height="1"/><rect x="1488" y="189" width="1" height="1"/><rect x="1488" y="190" width="1" height="1"/><rect x="1489" y="194" width="1" height="1"/><rect x="1490" y="195" width="1" height="1"/><rect x="1490" y="196" width="1" height="1"/><rect x="1491" y="200" width="1" height="1"/><rect x="1491" y="201" width="1" height="1"/><rect x="1492" y="202" width="1" height="1"/><rect x="1493" y="206" width="1" height="1"/><rect x="1493" y="207" width="1" height="1"/><rect x="1494" y="208" width="1" height="1"/><rect x="1495" y="212" width="1" height="1"/><rect x="1495" y="213" width="1" height="1"/><rect x="1495" y="214" width="1" height="1"/><rect x="1497" y="218" width="1" height="1"/><rect x="1497" y="219" width="1" height="1"/><rect x="1497" y="220" width="1" height="1"/><rect x="1602" y="150" width="1" height="1"/><rect x="1603" y="149" width="1" height="1"/><rect x="1603" y="148" width="1" height="1"/><rect x="1605" y="144" width="1" height="1"/><rect x="1606" y="143" width="1" height="1"/><rect x="1606" y="142" width="1" height="1"/><rect x="1608" y="138" width="1" height="1"/><rect x="1609" y="137" width="1" height="1"/><rect x="1609" y="136" width="1" height="1"/><rect x="1611" y="132" width="1" height="1"/><rect x="1612" y="131" width="1" height="1"/><rect x="1612" y="130" width="1" height="1"/><rect x="1614" y="126" width="1" height="1"/><rect x="1615" y="125" width="1" height="1"/><rect x="1615" y="124" width="1" height="1"/><rect x="1617" y="120" width="1" height="1"/><rect x="1618" y="119" width="1" height="1"/><rect x="1770" y="294" width="1" height="1"/><rect x="1770" y="293" width="1" height="1"/><rect x="1770" y="292" width="1" height="1"/><rect x="1770" y="288" width="1" height="1"/><rect x="1770" y="287" width="1" height="1"/><rect x="1770" y="286" width="1" height="1"/><rect x="1770" y="282" width="1" height="1"/><rect x="1770" y="281" width="1" height="1"/><rect x="1770" y="280" width="1" height="1"/><rect x="1770" y="276" width="1" height="1"/><rect x="1770" y="275" width="1" height="1"/><rect x="1770" y="274" width="1" height="1"/><rect x="1770" y="270" width="1" height="1"/><rect x="1770" y="269" width="1" height="1"/><rect x="1770" y="268" width="1" height="1"/><rect x="1770" y="264" width="1" height="1"/><rect x="1770" y="263" width="1" height="1"/><rect x="1770" y="262" width="1" height="1"/></g>
<g fill="#fff"><rect x="46" y="844" width="9" height="1"/><rect x="45" y="841" width="11" height="1"/><rect x="47" y="845" width="7" height="1"/><rect x="44" y="842" width="13" height="1"/><rect x="48" y="846" width="5" height="1"/><rect x="48" y="838" width="5" height="1"/><rect x="45" y="843" width="11" height="1"/><rect x="47" y="839" width="7" height="1"/><rect x="49" y="847" width="3" height="1"/><rect x="47" y="840" width="7" height="1"/><rect x="50" y="848" width="1" height="1"/></g>
<g fill="#fff"><rect x="127" y="733" width="7" height="1"/><rect x="125" y="735" width="11" height="1"/><rect x="126" y="738" width="9" height="1"/><rect x="125" y="737" width="11" height="1"/><rect x="127" y="734" width="7" height="1"/><rect x="127" y="739" width="7" height="1"/><rect x="128" y="740" width="5" height="1"/><rect x="124" y="736" width="13" height="1"/><rect x="128" y="732" width="5" height="1"/><rect x="129" y="741" width="3" height="1"/><rect x="130" y="742" width="1" height="1"/></g>
<g fill="#fff"><rect x="223" y="697" width="7" height="1"/><rect x="223" y="703" width="7" height="1"/><rect x="221" y="699" width="11" height="1"/><rect x="223" y="698" width="7" height="1"/><rect x="220" y="700" width="13" height="1"/><rect x="224" y="696" width="5" height="1"/><rect x="221" y="701" width="11" height="1"/><rect x="222" y="702" width="9" height="1"/><rect x="225" y="705" width="3" height="1"/><rect x="224" y="704" width="5" height="1"/><rect x="226" y="706" width="1" height="1"/></g>
<g fill="#fff"><rect x="404" y="635" width="13" height="1"/><rect x="405" y="634" width="11" height="1"/><rect x="405" y="636" width="11" height="1"/><rect x="406" y="637" width="9" height="1"/><rect x="407" y="638" width="7" height="1"/><rect x="408" y="639" width="5" height="1"/><rect x="408" y="631" width="5" height="1"/><rect x="409" y="640" width="3" height="1"/><rect x="407" y="632" width="7" height="1"/><rect x="410" y="641" width="1" height="1"/><rect x="407" y="633" width="7" height="1"/></g>
<g fill="#fff"><rect x="684" y="560" width="13" height="1"/><rect x="685" y="559" width="11" height="1"/><rect x="685" y="561" width="11" height="1"/><rect x="686" y="562" width="9" height="1"/><rect x="687" y="563" width="7" height="1"/><rect x="688" y="556" width="5" height="1"/><rect x="689" y="565" width="3" height="1"/><rect x="688" y="564" width="5" height="1"/><rect x="687" y="557" width="7" height="1"/><rect x="687" y="558" width="7" height="1"/><rect x="690" y="566" width="1" height="1"/></g>
<g fill="#fff"><rect x="702" y="686" width="9" height="1"/><rect x="701" y="685" width="11" height="1"/><rect x="703" y="687" width="7" height="1"/><rect x="701" y="683" width="11" height="1"/><rect x="704" y="688" width="5" height="1"/><rect x="700" y="684" width="13" height="1"/><rect x="705" y="689" width="3" height="1"/><rect x="703" y="681" width="7" height="1"/><rect x="704" y="680" width="5" height="1"/><rect x="703" y="682" width="7" height="1"/><rect x="706" y="690" width="1" height="1"/></g>
<g fill="#fff"><rect x="764" y="643" width="13" height="1"/><rect x="767" y="640" width="7" height="1"/><rect x="765" y="642" width="11" height="1"/><rect x="770" y="649" width="1" height="1"/><rect x="766" y="645" width="9" height="1"/><rect x="765" y="644" width="11" height="1"/><rect x="767" y="646" width="7" height="1"/><rect x="768" y="647" width="5" height="1"/><rect x="769" y="648" width="3" height="1"/><rect x="768" y="639" width="5" height="1"/><rect x="767" y="641" width="7" height="1"/></g>
<g fill="#fff"><rect x="869" y="605" width="11" height="1"/><rect x="870" y="608" width="9" height="1"/><rect x="869" y="607" width="11" height="1"/><rect x="871" y="609" width="7" height="1"/><rect x="868" y="606" width="13" height="1"/><rect x="872" y="602" width="5" height="1"/><rect x="873" y="611" width="3" height="1"/><rect x="872" y="610" width="5" height="1"/><rect x="871" y="603" width="7" height="1"/><rect x="874" y="612" width="1" height="1"/><rect x="871" y="604" width="7" height="1"/></g>
<g fill="#fff"><rect x="878" y="582" width="9" height="1"/><rect x="880" y="576" width="5" height="1"/><rect x="880" y="584" width="5" height="1"/><rect x="877" y="581" width="11" height="1"/><rect x="877" y="579" width="11" height="1"/><rect x="879" y="578" width="7" height="1"/><rect x="879" y="577" width="7" height="1"/><rect x="879" y="583" width="7" height="1"/><rect x="876" y="580" width="13" height="1"/><rect x="882" y="586" width="1" height="1"/><rect x="881" y="585" width="3" height="1"/></g>
<g fill="#fff"><rect x="894" y="566" width="9" height="1"/><rect x="893" y="563" width="11" height="1"/><rect x="895" y="562" width="7" height="1"/><rect x="896" y="568" width="5" height="1"/><rect x="892" y="564" width="13" height="1"/><rect x="896" y="560" width="5" height="1"/><rect x="893" y="565" width="11" height="1"/><rect x="895" y="561" width="7" height="1"/><rect x="895" y="567" width="7" height="1"/><rect x="897" y="569" width="3" height="1"/><rect x="898" y="570" width="1" height="1"/></g>
<g fill="#fff"><rect x="940" y="554" width="13" height="1"/><rect x="942" y="556" width="9" height="1"/><rect x="941" y="555" width="11" height="1"/><rect x="941" y="553" width="11" height="1"/><rect x="943" y="552" width="7" height="1"/><rect x="944" y="558" width="5" height="1"/><rect x="944" y="550" width="5" height="1"/><rect x="943" y="551" width="7" height="1"/><rect x="943" y="557" width="7" height="1"/><rect x="945" y="559" width="3" height="1"/><rect x="946" y="560" width="1" height="1"/></g>
<g fill="#fff"><rect x="1261" y="291" width="11" height="1"/><rect x="1260" y="292" width="13" height="1"/><rect x="1261" y="293" width="11" height="1"/><rect x="1262" y="294" width="9" height="1"/><rect x="1263" y="295" width="7" height="1"/><rect x="1264" y="288" width="5" height="1"/><rect x="1265" y="297" width="3" height="1"/><rect x="1264" y="296" width="5" height="1"/><rect x="1263" y="290" width="7" height="1"/><rect x="1263" y="289" width="7" height="1"/><rect x="1266" y="298" width="1" height="1"/></g>
<g fill="#fff"><rect x="1396" y="148" width="13" height="1"/><rect x="1399" y="151" width="7" height="1"/><rect x="1401" y="153" width="3" height="1"/><rect x="1398" y="150" width="9" height="1"/><rect x="1397" y="147" width="11" height="1"/><rect x="1400" y="144" width="5" height="1"/><rect x="1399" y="146" width="7" height="1"/><rect x="1397" y="149" width="11" height="1"/><rect x="1399" y="145" width="7" height="1"/><rect x="1400" y="152" width="5" height="1"/><rect x="1402" y="154" width="1" height="1"/></g>
<g fill="#fff"><rect x="1444" y="125" width="13" height="1"/><rect x="1448" y="121" width="5" height="1"/><rect x="1446" y="127" width="9" height="1"/><rect x="1448" y="129" width="5" height="1"/><rect x="1445" y="126" width="11" height="1"/><rect x="1447" y="122" width="7" height="1"/><rect x="1447" y="123" width="7" height="1"/><rect x="1447" y="128" width="7" height="1"/><rect x="1445" y="124" width="11" height="1"/><rect x="1449" y="130" width="3" height="1"/><rect x="1450" y="131" width="1" height="1"/></g>
<g fill="#fff"><rect x="1497" y="223" width="3" height="1"/><rect x="1494" y="220" width="9" height="1"/><rect x="1492" y="218" width="13" height="1"/><rect x="1495" y="215" width="7" height="1"/><rect x="1493" y="217" width="11" height="1"/><rect x="1493" y="219" width="11" height="1"/><rect x="1496" y="222" width="5" height="1"/><rect x="1495" y="216" width="7" height="1"/><rect x="1495" y="221" width="7" height="1"/><rect x="1496" y="214" width="5" height="1"/><rect x="1498" y="224" width="1" height="1"/></g>
<g fill="#fff"><rect x="1617" y="119" width="3" height="1"/><rect x="1613" y="115" width="11" height="1"/><rect x="1612" y="114" width="13" height="1"/><rect x="1615" y="111" width="7" height="1"/><rect x="1616" y="110" width="5" height="1"/><rect x="1614" y="116" width="9" height="1"/><rect x="1615" y="112" width="7" height="1"/><rect x="1615" y="117" width="7" height="1"/><rect x="1613" y="113" width="11" height="1"/><rect x="1616" y="118" width="5" height="1"/><rect x="1618" y="120" width="1" height="1"/></g>
<g fill="#fff"><rect x="1768" y="261" width="5" height="1"/><rect x="1767" y="254" width="7" height="1"/><rect x="1765" y="256" width="11" height="1"/><rect x="1768" y="253" width="5" height="1"/><rect x="1769" y="262" width="3" height="1"/><rect x="1765" y="258" width="11" height="1"/><rect x="1764" y="257" width="13" height="1"/><rect x="1767" y="255" width="7" height="1"/><rect x="1766" y="259" width="9" height="1"/><rect x="1767" y="260" width="7" height="1"/><rect x="1770" y="263" width="1" height="1"/></g>
<g fill="#e2441c"><rect x="48" y="839" width="5" height="1"/><rect x="48" y="840" width="5" height="1"/><rect x="48" y="841" width="5" height="1"/><rect x="45" y="842" width="11" height="1"/><rect x="46" y="843" width="9" height="1"/><rect x="47" y="844" width="7" height="1"/><rect x="48" y="845" width="5" height="1"/><rect x="49" y="846" width="3" height="1"/><rect x="50" y="847" width="1" height="1"/></g>
<g fill="#e2441c"><rect x="128" y="733" width="5" height="1"/><rect x="128" y="734" width="5" height="1"/><rect x="128" y="735" width="5" height="1"/><rect x="125" y="736" width="11" height="1"/><rect x="126" y="737" width="9" height="1"/><rect x="127" y="738" width="7" height="1"/><rect x="128" y="739" width="5" height="1"/><rect x="129" y="740" width="3" height="1"/><rect x="130" y="741" width="1" height="1"/></g>
<g fill="#e2441c"><rect x="224" y="697" width="5" height="1"/><rect x="224" y="698" width="5" height="1"/><rect x="224" y="699" width="5" height="1"/><rect x="221" y="700" width="11" height="1"/><rect x="222" y="701" width="9" height="1"/><rect x="223" y="702" width="7" height="1"/><rect x="224" y="703" width="5" height="1"/><rect x="225" y="704" width="3" height="1"/><rect x="226" y="705" width="1" height="1"/></g>
<g fill="#e2441c"><rect x="408" y="632" width="5" height="1"/><rect x="408" y="633" width="5" height="1"/><rect x="408" y="634" width="5" height="1"/><rect x="405" y="635" width="11" height="1"/><rect x="406" y="636" width="9" height="1"/><rect x="407" y="637" width="7" height="1"/><rect x="408" y="638" width="5" height="1"/><rect x="409" y="639" width="3" height="1"/><rect x="410" y="640" width="1" height="1"/></g>
<g fill="#e2441c"><rect x="688" y="557" width="5" height="1"/><rect x="688" y="558" width="5" height="1"/><rect x="688" y="559" width="5" height="1"/><rect x="685" y="560" width="11" height="1"/><rect x="686" y="561" width="9" height="1"/><rect x="687" y="562" width="7" height="1"/><rect x="688" y="563" width="5" height="1"/><rect x="689" y="564" width="3" height="1"/><rect x="690" y="565" width="1" height="1"/></g>
<g fill="#e2441c"><rect x="704" y="681" width="5" height="1"/><rect x="704" y="682" width="5" height="1"/><rect x="704" y="683" width="5" height="1"/><rect x="701" y="684" width="11" height="1"/><rect x="702" y="685" width="9" height="1"/><rect x="703" y="686" width="7" height="1"/><rect x="704" y="687" width="5" height="1"/><rect x="705" y="688" width="3" height="1"/><rect x="706" y="689" width="1" height="1"/></g>
<g fill="#e2441c"><rect x="768" y="640" width="5" height="1"/><rect x="768" y="641" width="5" height="1"/><rect x="768" y="642" width="5" height="1"/><rect x="765" y="643" width="11" height="1"/><rect x="766" y="644" width="9" height="1"/><rect x="767" y="645" width="7" height="1"/><rect x="768" y="646" width="5" height="1"/><rect x="769" y="647" width="3" height="1"/><rect x="770" y="648" width="1" height="1"/></g>
<g fill="#e2441c"><rect x="872" y="603" width="5" height="1"/><rect x="872" y="604" width="5" height="1"/><rect x="872" y="605" width="5" height="1"/><rect x="869" y="606" width="11" height="1"/><rect x="870" y="607" width="9" height="1"/><rect x="871" y="608" width="7" height="1"/><rect x="872" y="609" width="5" height="1"/><rect x="873" y="610" width="3" height="1"/><rect x="874" y="611" width="1" height="1"/></g>
<g fill="#e2441c"><rect x="880" y="577" width="5" height="1"/><rect x="880" y="578" width="5" height="1"/><rect x="880" y="579" width="5" height="1"/><rect x="877" y="580" width="11" height="1"/><rect x="878" y="581" width="9" height="1"/><rect x="879" y="582" width="7" height="1"/><rect x="880" y="583" width="5" height="1"/><rect x="881" y="584" width="3" height="1"/><rect x="882" y="585" width="1" height="1"/></g>
<g fill="#e2441c"><rect x="896" y="561" width="5" height="1"/><rect x="896" y="562" width="5" height="1"/><rect x="896" y="563" width="5" height="1"/><rect x="893" y="564" width="11" height="1"/><rect x="894" y="565" width="9" height="1"/><rect x="895" y="566" width="7" height="1"/><rect x="896" y="567" width="5" height="1"/><rect x="897" y="568" width="3" height="1"/><rect x="898" y="569" width="1" height="1"/></g>
<g fill="#e2441c"><rect x="944" y="551" width="5" height="1"/><rect x="944" y="552" width="5" height="1"/><rect x="944" y="553" width="5" height="1"/><rect x="941" y="554" width="11" height="1"/><rect x="942" y="555" width="9" height="1"/><rect x="943" y="556" width="7" height="1"/><rect x="944" y="557" width="5" height="1"/><rect x="945" y="558" width="3" height="1"/><rect x="946" y="559" width="1" height="1"/></g>
<g fill="#e2441c"><rect x="1264" y="289" width="5" height="1"/><rect x="1264" y="290" width="5" height="1"/><rect x="1264" y="291" width="5" height="1"/><rect x="1261" y="292" width="11" height="1"/><rect x="1262" y="293" width="9" height="1"/><rect x="1263" y="294" width="7" height="1"/><rect x="1264" y="295" width="5" height="1"/><rect x="1265" y="296" width="3" height="1"/><rect x="1266" y="297" width="1" height="1"/></g>
<g fill="#e2441c"><rect x="1400" y="145" width="5" height="1"/><rect x="1400" y="146" width="5" height="1"/><rect x="1400" y="147" width="5" height="1"/><rect x="1397" y="148" width="11" height="1"/><rect x="1398" y="149" width="9" height="1"/><rect x="1399" y="150" width="7" height="1"/><rect x="1400" y="151" width="5" height="1"/><rect x="1401" y="152" width="3" height="1"/><rect x="1402" y="153" width="1" height="1"/></g>
<g fill="#e2441c"><rect x="1448" y="122" width="5" height="1"/><rect x="1448" y="123" width="5" height="1"/><rect x="1448" y="124" width="5" height="1"/><rect x="1445" y="125" width="11" height="1"/><rect x="1446" y="126" width="9" height="1"/><rect x="1447" y="127" width="7" height="1"/><rect x="1448" y="128" width="5" height="1"/><rect x="1449" y="129" width="3" height="1"/><rect x="1450" y="130" width="1" height="1"/></g>
<g fill="#e2441c"><rect x="1496" y="215" width="5" height="1"/><rect x="1496" y="216" width="5" height="1"/><rect x="1496" y="217" width="5" height="1"/><rect x="1493" y="218" width="11" height="1"/><rect x="1494" y="219" width="9" height="1"/><rect x="1495" y="220" width="7" height="1"/><rect x="1496" y="221" width="5" height="1"/><rect x="1497" y="222" width="3" height="1"/><rect x="1498" y="223" width="1" height="1"/></g>
<g fill="#e2441c"><rect x="1616" y="111" width="5" height="1"/><rect x="1616" y="112" width="5" height="1"/><rect x="1616" y="113" width="5" height="1"/><rect x="1613" y="114" width="11" height="1"/><rect x="1614" y="115" width="9" height="1"/><rect x="1615" y="116" width="7" height="1"/><rect x="1616" y="117" width="5" height="1"/><rect x="1617" y="118" width="3" height="1"/><rect x="1618" y="119" width="1" height="1"/></g>
<g fill="#e2441c"><rect x="1768" y="254" width="5" height="1"/><rect x="1768" y="255" width="5" height="1"/><rect x="1768" y="256" width="5" height="1"/><rect x="1765" y="257" width="11" height="1"/><rect x="1766" y="258" width="9" height="1"/><rect x="1767" y="259" width="7" height="1"/><rect x="1768" y="260" width="5" height="1"/><rect x="1769" y="261" width="3" height="1"/><rect x="1770" y="262" width="1" height="1"/></g>
<g fill="#fff"><rect x="95" y="778" width="7" height="1"/><rect x="93" y="775" width="11" height="1"/><rect x="94" y="774" width="9" height="1"/><rect x="95" y="779" width="7" height="1"/><rect x="92" y="776" width="13" height="1"/><rect x="96" y="780" width="5" height="1"/><rect x="95" y="773" width="7" height="1"/><rect x="93" y="777" width="11" height="1"/><rect x="97" y="771" width="3" height="1"/><rect x="98" y="770" width="1" height="1"/><rect x="96" y="772" width="5" height="1"/></g>
<g fill="#fff"><rect x="175" y="738" width="7" height="1"/><rect x="175" y="743" width="7" height="1"/><rect x="173" y="740" width="11" height="1"/><rect x="174" y="739" width="9" height="1"/><rect x="172" y="741" width="13" height="1"/><rect x="176" y="745" width="5" height="1"/><rect x="173" y="742" width="11" height="1"/><rect x="178" y="735" width="1" height="1"/><rect x="175" y="744" width="7" height="1"/><rect x="177" y="736" width="3" height="1"/><rect x="176" y="737" width="5" height="1"/></g>
<g fill="#fff"><rect x="341" y="675" width="11" height="1"/><rect x="341" y="677" width="11" height="1"/><rect x="345" y="671" width="3" height="1"/><rect x="344" y="680" width="5" height="1"/><rect x="340" y="676" width="13" height="1"/><rect x="343" y="678" width="7" height="1"/><rect x="342" y="674" width="9" height="1"/><rect x="343" y="673" width="7" height="1"/><rect x="343" y="679" width="7" height="1"/><rect x="344" y="672" width="5" height="1"/><rect x="346" y="670" width="1" height="1"/></g>
<g fill="#fff"><rect x="678" y="598" width="9" height="1"/><rect x="679" y="603" width="7" height="1"/><rect x="676" y="600" width="13" height="1"/><rect x="679" y="602" width="7" height="1"/><rect x="677" y="599" width="11" height="1"/><rect x="681" y="595" width="3" height="1"/><rect x="680" y="604" width="5" height="1"/><rect x="680" y="596" width="5" height="1"/><rect x="677" y="601" width="11" height="1"/><rect x="679" y="597" width="7" height="1"/><rect x="682" y="594" width="1" height="1"/></g>
<g fill="#fff"><rect x="692" y="592" width="13" height="1"/><rect x="695" y="589" width="7" height="1"/><rect x="695" y="594" width="7" height="1"/><rect x="694" y="590" width="9" height="1"/><rect x="693" y="591" width="11" height="1"/><rect x="697" y="587" width="3" height="1"/><rect x="696" y="596" width="5" height="1"/><rect x="693" y="593" width="11" height="1"/><rect x="695" y="595" width="7" height="1"/><rect x="696" y="588" width="5" height="1"/><rect x="698" y="586" width="1" height="1"/></g>
<g fill="#fff"><rect x="741" y="685" width="11" height="1"/><rect x="743" y="687" width="7" height="1"/><rect x="741" y="683" width="11" height="1"/><rect x="740" y="684" width="13" height="1"/><rect x="743" y="686" width="7" height="1"/><rect x="746" y="678" width="1" height="1"/><rect x="744" y="680" width="5" height="1"/><rect x="742" y="682" width="9" height="1"/><rect x="743" y="681" width="7" height="1"/><rect x="745" y="679" width="3" height="1"/><rect x="744" y="688" width="5" height="1"/></g>
<g fill="#fff"><rect x="847" y="650" width="7" height="1"/><rect x="844" y="647" width="13" height="1"/><rect x="848" y="651" width="5" height="1"/><rect x="848" y="643" width="5" height="1"/><rect x="847" y="649" width="7" height="1"/><rect x="845" y="648" width="11" height="1"/><rect x="847" y="644" width="7" height="1"/><rect x="846" y="645" width="9" height="1"/><rect x="845" y="646" width="11" height="1"/><rect x="849" y="642" width="3" height="1"/><rect x="850" y="641" width="1" height="1"/></g>
<g fill="#fff"><rect x="877" y="620" width="11" height="1"/><rect x="876" y="619" width="13" height="1"/><rect x="879" y="621" width="7" height="1"/><rect x="879" y="622" width="7" height="1"/><rect x="877" y="618" width="11" height="1"/><rect x="881" y="614" width="3" height="1"/><rect x="880" y="623" width="5" height="1"/><rect x="880" y="615" width="5" height="1"/><rect x="879" y="616" width="7" height="1"/><rect x="878" y="617" width="9" height="1"/><rect x="882" y="613" width="1" height="1"/></g>
<g fill="#fff"><rect x="896" y="609" width="5" height="1"/><rect x="892" y="605" width="13" height="1"/><rect x="893" y="604" width="11" height="1"/><rect x="897" y="600" width="3" height="1"/><rect x="893" y="606" width="11" height="1"/><rect x="895" y="602" width="7" height="1"/><rect x="895" y="607" width="7" height="1"/><rect x="895" y="608" width="7" height="1"/><rect x="896" y="601" width="5" height="1"/><rect x="894" y="603" width="9" height="1"/><rect x="898" y="599" width="1" height="1"/></g>
<g fill="#fff"><rect x="909" y="595" width="11" height="1"/><rect x="911" y="596" width="7" height="1"/><rect x="910" y="592" width="9" height="1"/><rect x="911" y="591" width="7" height="1"/><rect x="912" y="598" width="5" height="1"/><rect x="911" y="597" width="7" height="1"/><rect x="908" y="594" width="13" height="1"/><rect x="909" y="593" width="11" height="1"/><rect x="913" y="589" width="3" height="1"/><rect x="912" y="590" width="5" height="1"/><rect x="914" y="588" width="1" height="1"/></g>
<g fill="#fff"><rect x="1245" y="334" width="11" height="1"/><rect x="1246" y="331" width="9" height="1"/><rect x="1247" y="330" width="7" height="1"/><rect x="1247" y="335" width="7" height="1"/><rect x="1245" y="332" width="11" height="1"/><rect x="1249" y="328" width="3" height="1"/><rect x="1248" y="337" width="5" height="1"/><rect x="1244" y="333" width="13" height="1"/><rect x="1247" y="336" width="7" height="1"/><rect x="1248" y="329" width="5" height="1"/><rect x="1250" y="327" width="1" height="1"/></g>
<g fill="#fff"><rect x="1381" y="190" width="11" height="1"/><rect x="1380" y="189" width="13" height="1"/><rect x="1381" y="188" width="11" height="1"/><rect x="1383" y="191" width="7" height="1"/><rect x="1383" y="192" width="7" height="1"/><rect x="1382" y="187" width="9" height="1"/><rect x="1384" y="193" width="5" height="1"/><rect x="1384" y="185" width="5" height="1"/><rect x="1383" y="186" width="7" height="1"/><rect x="1385" y="184" width="3" height="1"/><rect x="1386" y="183" width="1" height="1"/></g>
<g fill="#fff"><rect x="1429" y="165" width="11" height="1"/><rect x="1429" y="167" width="11" height="1"/><rect x="1430" y="164" width="9" height="1"/><rect x="1431" y="169" width="7" height="1"/><rect x="1428" y="166" width="13" height="1"/><rect x="1434" y="160" width="1" height="1"/><rect x="1432" y="162" width="5" height="1"/><rect x="1431" y="168" width="7" height="1"/><rect x="1433" y="161" width="3" height="1"/><rect x="1432" y="170" width="5" height="1"/><rect x="1431" y="163" width="7" height="1"/></g>
<g fill="#fff"><rect x="1461" y="122" width="11" height="1"/><rect x="1462" y="119" width="9" height="1"/><rect x="1465" y="116" width="3" height="1"/><rect x="1464" y="125" width="5" height="1"/><rect x="1463" y="124" width="7" height="1"/><rect x="1461" y="120" width="11" height="1"/><rect x="1460" y="121" width="13" height="1"/><rect x="1463" y="118" width="7" height="1"/><rect x="1464" y="117" width="5" height="1"/><rect x="1463" y="123" width="7" height="1"/><rect x="1466" y="115" width="1" height="1"/></g>
<g fill="#fff"><rect x="1599" y="157" width="7" height="1"/><rect x="1597" y="154" width="11" height="1"/><rect x="1598" y="153" width="9" height="1"/><rect x="1601" y="150" width="3" height="1"/><rect x="1600" y="159" width="5" height="1"/><rect x="1596" y="155" width="13" height="1"/><rect x="1599" y="152" width="7" height="1"/><rect x="1597" y="156" width="11" height="1"/><rect x="1599" y="158" width="7" height="1"/><rect x="1600" y="151" width="5" height="1"/><rect x="1602" y="149" width="1" height="1"/></g>
<g fill="#fff"><rect x="1765" y="300" width="11" height="1"/><rect x="1767" y="302" width="7" height="1"/><rect x="1764" y="299" width="13" height="1"/><rect x="1766" y="297" width="9" height="1"/><rect x="1767" y="296" width="7" height="1"/><rect x="1767" y="301" width="7" height="1"/><rect x="1770" y="293" width="1" height="1"/><rect x="1765" y="298" width="11" height="1"/><rect x="1768" y="295" width="5" height="1"/><rect x="1769" y="294" width="3" height="1"/><rect x="1768" y="303" width="5" height="1"/></g>
<g fill="#0b60b5"><rect x="98" y="771" width="1" height="1"/><rect x="97" y="772" width="3" height="1"/><rect x="96" y="773" width="5" height="1"/><rect x="95" y="774" width="7" height="1"/><rect x="94" y="775" width="9" height="1"/><rect x="93" y="776" width="11" height="1"/><rect x="96" y="777" width="5" height="1"/><rect x="96" y="778" width="5" height="1"/><rect x="96" y="779" width="5" height="1"/></g>
<g fill="#0b60b5"><rect x="178" y="736" width="1" height="1"/><rect x="177" y="737" width="3" height="1"/><rect x="176" y="738" width="5" height="1"/><rect x="175" y="739" width="7" height="1"/><rect x="174" y="740" width="9" height="1"/><rect x="173" y="741" width="11" height="1"/><rect x="176" y="742" width="5" height="1"/><rect x="176" y="743" width="5" height="1"/><rect x="176" y="744" width="5" height="1"/></g>
<g fill="#0b60b5"><rect x="346" y="671" width="1" height="1"/><rect x="345" y="672" width="3" height="1"/><rect x="344" y="673" width="5" height="1"/><rect x="343" y="674" width="7" height="1"/><rect x="342" y="675" width="9" height="1"/><rect x="341" y="676" width="11" height="1"/><rect x="344" y="677" width="5" height="1"/><rect x="344" y="678" width="5" height="1"/><rect x="344" y="679" width="5" height="1"/></g>
<g fill="#0b60b5"><rect x="682" y="595" width="1" height="1"/><rect x="681" y="596" width="3" height="1"/><rect x="680" y="597" width="5" height="1"/><rect x="679" y="598" width="7" height="1"/><rect x="678" y="599" width="9" height="1"/><rect x="677" y="600" width="11" height="1"/><rect x="680" y="601" width="5" height="1"/><rect x="680" y="602" width="5" height="1"/><rect x="680" y="603" width="5" height="1"/></g>
<g fill="#0b60b5"><rect x="698" y="587" width="1" height="1"/><rect x="697" y="588" width="3" height="1"/><rect x="696" y="589" width="5" height="1"/><rect x="695" y="590" width="7" height="1"/><rect x="694" y="591" width="9" height="1"/><rect x="693" y="592" width="11" height="1"/><rect x="696" y="593" width="5" height="1"/><rect x="696" y="594" width="5" height="1"/><rect x="696" y="595" width="5" height="1"/></g>
<g fill="#0b60b5"><rect x="746" y="679" width="1" height="1"/><rect x="745" y="680" width="3" height="1"/><rect x="744" y="681" width="5" height="1"/><rect x="743" y="682" width="7" height="1"/><rect x="742" y="683" width="9" height="1"/><rect x="741" y="684" width="11" height="1"/><rect x="744" y="685" width="5" height="1"/><rect x="744" y="686" width="5" height="1"/><rect x="744" y="687" width="5" height="1"/></g>
<g fill="#0b60b5"><rect x="850" y="642" width="1" height="1"/><rect x="849" y="643" width="3" height="1"/><rect x="848" y="644" width="5" height="1"/><rect x="847" y="645" width="7" height="1"/><rect x="846" y="646" width="9" height="1"/><rect x="845" y="647" width="11" height="1"/><rect x="848" y="648" width="5" height="1"/><rect x="848" y="649" width="5" height="1"/><rect x="848" y="650" width="5" height="1"/></g>
<g fill="#0b60b5"><rect x="882" y="614" width="1" height="1"/><rect x="881" y="615" width="3" height="1"/><rect x="880" y="616" width="5" height="1"/><rect x="879" y="617" width="7" height="1"/><rect x="878" y="618" width="9" height="1"/><rect x="877" y="619" width="11" height="1"/><rect x="880" y="620" width="5" height="1"/><rect x="880" y="621" width="5" height="1"/><rect x="880" y="622" width="5" height="1"/></g>
<g fill="#0b60b5"><rect x="898" y="600" width="1" height="1"/><rect x="897" y="601" width="3" height="1"/><rect x="896" y="602" width="5" height="1"/><rect x="895" y="603" width="7" height="1"/><rect x="894" y="604" width="9" height="1"/><rect x="893" y="605" width="11" height="1"/><rect x="896" y="606" width="5" height="1"/><rect x="896" y="607" width="5" height="1"/><rect x="896" y="608" width="5" height="1"/></g>
<g fill="#0b60b5"><rect x="914" y="589" width="1" height="1"/><rect x="913" y="590" width="3" height="1"/><rect x="912" y="591" width="5" height="1"/><rect x="911" y="592" width="7" height="1"/><rect x="910" y="593" width="9" height="1"/><rect x="909" y="594" width="11" height="1"/><rect x="912" y="595" width="5" height="1"/><rect x="912" y="596" width="5" height="1"/><rect x="912" y="597" width="5" height="1"/></g>
<g fill="#0b60b5"><rect x="1250" y="328" width="1" height="1"/><rect x="1249" y="329" width="3" height="1"/><rect x="1248" y="330" width="5" height="1"/><rect x="1247" y="331" width="7" height="1"/><rect x="1246" y="332" width="9" height="1"/><rect x="1245" y="333" width="11" height="1"/><rect x="1248" y="334" width="5" height="1"/><rect x="1248" y="335" width="5" height="1"/><rect x="1248" y="336" width="5" height="1"/></g>
<g fill="#0b60b5"><rect x="1386" y="184" width="1" height="1"/><rect x="1385" y="185" width="3" height="1"/><rect x="1384" y="186" width="5" height="1"/><rect x="1383" y="187" width="7" height="1"/><rect x="1382" y="188" width="9" height="1"/><rect x="1381" y="189" width="11" height="1"/><rect x="1384" y="190" width="5" height="1"/><rect x="1384" y="191" width="5" height="1"/><rect x="1384" y="192" width="5" height="1"/></g>
<g fill="#0b60b5"><rect x="1434" y="161" width="1" height="1"/><rect x="1433" y="162" width="3" height="1"/><rect x="1432" y="163" width="5" height="1"/><rect x="1431" y="164" width="7" height="1"/><rect x="1430" y="165" width="9" height="1"/><rect x="1429" y="166" width="11" height="1"/><rect x="1432" y="167" width="5" height="1"/><rect x="1432" y="168" width="5" height="1"/><rect x="1432" y="169" width="5" height="1"/></g>
<g fill="#0b60b5"><rect x="1466" y="116" width="1" height="1"/><rect x="1465" y="117" width="3" height="1"/><rect x="1464" y="118" width="5" height="1"/><rect x="1463" y="119" width="7" height="1"/><rect x="1462" y="120" width="9" height="1"/><rect x="1461" y="121" width="11" height="1"/><rect x="1464" y="122" width="5" height="1"/><rect x="1464" y="123" width="5" height="1"/><rect x="1464" y="124" width="5" height="1"/></g>
<g fill="#0b60b5"><rect x="1602" y="150" width="1" height="1"/><rect x="1601" y="151" width="3" height="1"/><rect x="1600" y="152" width="5" height="1"/><rect x="1599" y="153" width="7" height="1"/><rect x="1598" y="154" width="9" height="1"/><rect x="1597" y="155" width="11" height="1"/><rect x="1600" y="156" width="5" height="1"/><rect x="1600" y="157" width="5" height="1"/><rect x="1600" y="158" width="5" height="1"/></g>
<g fill="#0b60b5"><rect x="1770" y="294" width="1" height="1"/><rect x="1769" y="295" width="3" height="1"/><rect x="1768" y="296" width="5" height="1"/><rect x="1767" y="297" width="7" height="1"/><rect x="1766" y="298" width="9" height="1"/><rect x="1765" y="299" width="11" height="1"/><rect x="1768" y="300" width="5" height="1"/><rect x="1768" y="301" width="5" height="1"/><rect x="1768" y="302" width="5" height="1"/></g>
</g>
<rect x="2" y="95" width="1849" height="1" fill="#000"/>
<rect x="2" y="942" width="1849" height="1" fill="#000"/>
<rect x="2" y="95" width="1" height="848" fill="#000"/>
<rect x="1850" y="95" width="1" height="848" fill="#000"/>
<rect x="1851" y="110" width="4" height="1" fill="#000"/>
<rect x="1851" y="142" width="4" height="1" fill="#000"/>
<rect x="1851" y="174" width="4" height="1" fill="#000"/>
<rect x="1851" y="206" width="4" height="1" fill="#000"/>
<rect x="1851" y="238" width="4" height="1" fill="#000"/>
<rect x="1851" y="270" width="4" height="1" fill="#000"/>
<rect x="1851" y="302" width="4" height="1" fill="#000"/>
<rect x="1851" y="334" width="4" height="1" fill="#000"/>
<rect x="1851" y="366" width="4" height="1" fill="#000"/>
<rect x="1851" y="398" width="4" height="1" fill="#000"/>
<rect x="1851" y="430" width="4" height="1" fill="#000"/>
<rect x="1851" y="462" width="4" height="1" fill="#000"/>
<rect x="1851" y="494" width="4" height="1" fill="#000"/>
<rect x="1851" y="526" width="4" height="1" fill="#000"/>
<rect x="1851" y="558" width="4" height="1" fill="#000"/>
<rect x="1851" y="590" width="4" height="1" fill="#000"/>
<rect x="1851" y="622" width="4" height="1" fill="#000"/>
<rect x="1851" y="654" width="4" height="1" fill="#000"/>
<rect x="1851" y="686" width="4" height="1" fill="#000"/>
<rect x="1851" y="718" width="4" height="1" fill="#000"/>
<rect x="1851" y="750" width="4" height="1" fill="#000"/>
<rect x="1851" y="782" width="4" height="1" fill="#000"/>
<rect x="1851" y="814" width="4" height="1" fill="#000"/>
<rect x="1851" y="846" width="4" height="1" fill="#000"/>
<rect x="1851" y="878" width="4" height="1" fill="#000"/>
<rect x="1851" y="910" width="4" height="1" fill="#000"/>
<rect x="2" y="943" width="1" height="4" fill="#000"/>
<rect x="130" y="943" width="1" height="4" fill="#000"/>
<rect x="258" y="943" width="1" height="4" fill="#000"/>
<rect x="386" y="943" width="1" height="4" fill="#000"/>
<rect x="514" y="943" width="1" height="4" fill="#000"/>
<rect x="642" y="943" width="1" height="4" fill="#000"/>
<rect x="770" y="943" width="1" height="4" fill="#000"/>
<rect x="898" y="943" width="1" height="4" fill="#000"/>
<rect x="1026" y="943" width="1" height="4" fill="#000"/>
<rect x="1154" y="943" width="1" height="4" fill="#000"/>
<rect x="1282" y="943" width="1" height="4" fill="#000"/>
<rect x="1410" y="943" width="1" height="4" fill="#000"/>
<rect x="1538" y="943" width="1" height="4" fill="#000"/>
<rect x="1666" y="943" width="1" height="4" fill="#000"/>
<rect x="1794" y="943" width="1" height="4" fill="#000"/>
</svg>
<div class="pl" style="top:104px">4058.40</div>
<div class="pl" style="top:136px">4046.70</div>
<div class="pl" style="top:168px">4035.00</div>
<div class="pl" style="top:200px">4023.30</div>
<div class="pl" style="top:232px">4011.60</div>
<div class="pl" style="top:264px">3999.90</div>
<div class="pl" style="top:296px">3988.20</div>
<div class="pl" style="top:328px">3976.50</div>
<div class="pl" style="top:360px">3964.80</div>
<div class="pl" style="top:392px">3953.10</div>
<div class="pl" style="top:424px">3941.40</div>
<div class="pl" style="top:456px">3929.70</div>
<div class="pl" style="top:488px">3918.00</div>
<div class="pl" style="top:520px">3906.30</div>
<div class="pl" style="top:552px">3894.60</div>
<div class="pl" style="top:584px">3882.90</div>
<div class="pl" style="top:616px">3871.20</div>
<div class="pl" style="top:648px">3859.50</div>
<div class="pl" style="top:680px">3847.80</div>
<div class="pl" style="top:712px">3836.10</div>
<div class="pl" style="top:744px">3824.40</div>
<div class="pl" style="top:776px">3812.70</div>
<div class="pl" style="top:808px">3801.00</div>
<div class="pl" style="top:840px">3789.30</div>
<div class="pl" style="top:872px">3777.60</div>
<div class="pl" style="top:904px">3765.90</div>
<div class="curp">4032.64</div>
<div class="dl" style="left:2px">26 Sep 2025</div>
<div class="dl" style="left:130px">29 Sep 14:00</div>
<div class="dl" style="left:258px">30 Sep 07:00</div>
<div class="dl" style="left:386px">30 Sep 23:00</div>
<div class="dl" style="left:514px">1 Oct 16:00</div>
<div class="dl" style="left:642px">2 Oct 09:00</div>
<div class="dl" style="left:770px">3 Oct 02:00</div>
<div class="dl" style="left:898px">3 Oct 18:00</div>
<div class="dl" style="left:1026px">6 Oct 11:00</div>
<div class="dl" style="left:1154px">7 Oct 04:00</div>
<div class="dl" style="left:1282px">7 Oct 20:00</div>
<div class="dl" style="left:1410px">8 Oct 13:00</div>
<div class="dl" style="left:1538px">9 Oct 06:00</div>
<div class="dl" style="left:1666px">9 Oct 22:00</div>
<div class="dl" style="left:1794px">10 Oct 15:00</div>
<svg class="abs" style="left:0;top:90px" width="60" height="30">
  <rect x="8.8" y="11.8" width="17.5" height="13.5" rx="1.8" fill="#fff" stroke="#e05a4e" stroke-width="1.3"/>
  <path d="M17.5 11.8h7a1.8 1.8 0 0 1 1.8 1.8v10a1.8 1.8 0 0 1-1.8 1.8h-7z" fill="#cfe8fb" stroke="#1f74bf" stroke-width="1.3"/>
  <rect x="10.5" y="13.5" width="7" height="10" fill="#fde3dc"/>
  <path d="M11 15h6M11 18.5h6M11 22h6" stroke="#e05a4e" stroke-width="1.2"/>
  <path d="M18 15h6M18 18.5h6M18 22h6" stroke="#1f74bf" stroke-width="1.2"/>
  <path d="M36 13.5a1.5 1.5 0 0 1 1.5-1.5h1.5a1.5 1.5 0 0 1 1.5 1.5v4.5h2.5a1.5 1.5 0 0 1 1.5 1.5v4.5a1.5 1.5 0 0 1-1.5 1.5h-5.5a1.5 1.5 0 0 1-1.5-1.5z" fill="#fde3dc" stroke="#e05a4e" stroke-width="1.3"/>
  <path d="M53.5 13.5a1.5 1.5 0 0 0-1.5-1.5h-1.5a1.5 1.5 0 0 0-1.5 1.5v4.5h-2.5a1.5 1.5 0 0 0-1.5 1.5v4.5a1.5 1.5 0 0 0 1.5 1.5h5.5a1.5 1.5 0 0 0 1.5-1.5z" fill="#bde0fb" stroke="#1f74bf" stroke-width="1.3"/>
  <rect x="42" y="9" width="5.5" height="3" rx="1.5" fill="none" stroke="#b0b0b0" stroke-width="1"/>
</svg>
<div class="ct" style="left:62px;top:104px">XAUUSD, H1:&nbsp; Gold vs US Dollar&nbsp; 4032.87 4039.79 4024.99 4032.64</div>
<div class="ct" style="left:7px;top:123px">DUO GOLD EURUSD V1 [MagicNumber=0; ModoOperacao=1; LoteFixo=0.01; GainInput=5.0; PercBalance=5.0; ComentarioInicial=DUO V1; Suffix=]</div>
<div id="tabs"><div class="abs" style="left:0;top:0;width:1px;height:25px;background:#a0a0a0"></div>
  <div class="tab" style="left:19px">EURUSD,H1</div><div class="tsep" style="left:112px"></div>
  <div class="tab" style="left:127px">AUDNZD,H1</div><div class="tsep" style="left:225px"></div>
  <div class="tab" style="left:241px">GBPJPY,H1</div><div class="tsep" style="left:326px"></div>
  <div class="tab" style="left:342px">NZDJPY,H1</div><div class="tsep" style="left:431px"></div>
  <div class="tab" style="left:446px">EURNZD,H1</div><div class="tsep" style="left:541px"></div>
  <div class="tab" style="left:556px">XBRUSD,H1</div><div class="tsep" style="left:650px"></div>
  <div class="tab" style="left:664px">XTIUSD,H1</div>
  <div class="abs" style="left:751px;top:-1px;width:108px;height:24px;background:#fff;border:1px solid #000;border-top:none"></div>
  <div class="tab" style="left:765px;color:#000">XAUUSD,H1</div>
  <div class="tab" style="left:875px">EURUSD,H1</div>
  <svg class="abs" style="left:1860px;top:-966px" width="60" height="1000"><path d="M1879.5 975v8l-3.5-4z" fill="#b0b0b0" transform="translate(-1860,0)"/><path d="M1902 975v8l3.5-4z" fill="#b0b0b0" transform="translate(-1860,0)"/></svg>
</div>
<div id="status">
  <div class="st" style="left:2px;transform:scaleX(0.925)">For Help, press F1</div>
  <div class="ssep" style="left:1049px"></div>
  <div class="st" style="left:1055px">Default</div>
  <div class="ssep" style="left:1214px"></div><div class="ssep" style="left:1339px"></div><div class="ssep" style="left:1428px"></div>
  <div class="ssep" style="left:1517px"></div><div class="ssep" style="left:1602px"></div><div class="ssep" style="left:1689px"></div><div class="ssep" style="left:1773px"></div>
  <svg class="abs" style="left:1780px;top:4px" width="20" height="20"><rect x="0.5" y="14" width="2" height="3" fill="#2cb52c"/><rect x="4" y="11" width="2" height="6" fill="#2cb52c"/><rect x="7.5" y="8" width="2" height="9" fill="#2cb52c"/><rect x="11" y="5" width="2" height="12" fill="#2cb52c"/><rect x="14" y="4" width="1" height="13" fill="#d8d8d8"/></svg>
  <div class="st" style="left:1805px;transform:scaleX(0.96)">147.33 ms</div>
</div>
</body></html>
